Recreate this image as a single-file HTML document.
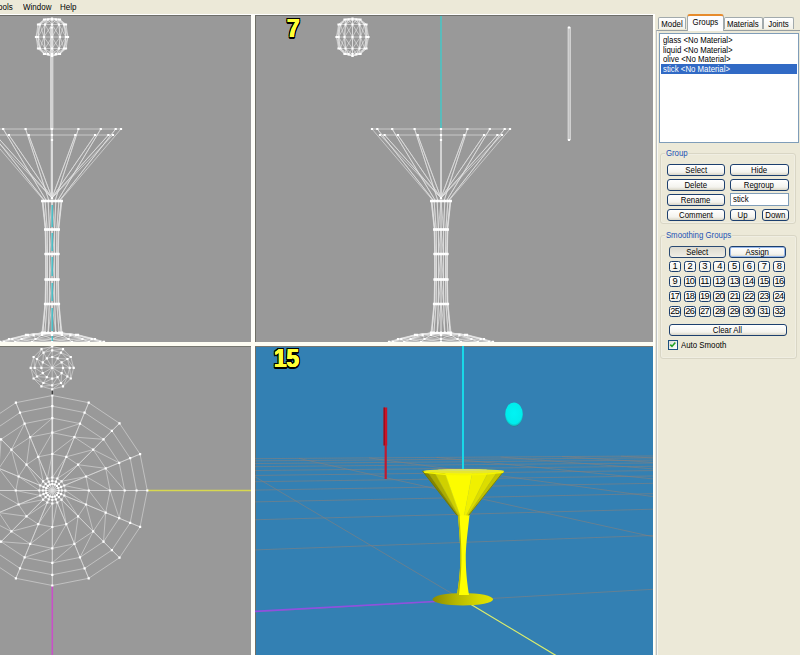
<!DOCTYPE html>
<html><head><meta charset="utf-8"><title>MilkShape 3D</title>
<style>
html,body{margin:0;padding:0}
body{width:800px;height:655px;overflow:hidden;background:#ece9d8;position:relative;font-family:"Liberation Sans",sans-serif;font-size:9px;color:#000}
.abs{position:absolute}
.menu span{position:absolute;top:1.6px;font-size:9.2px;line-height:11px;white-space:nowrap;transform:scaleX(.87);transform-origin:0 50%}
svg{position:absolute;left:0;top:0}
.tab{position:absolute;top:17px;height:12px;border:1px solid #a2aaac;border-bottom:none;border-radius:2px 2px 0 0;background:linear-gradient(#fff,#f3f2ea);box-sizing:border-box;text-align:center;font-size:8.8px;line-height:12px;white-space:nowrap}
.tab.sel{top:14px;height:17px;background:#fcfcfe;border-top:2px solid #e68b2c;line-height:13px;z-index:3;border-radius:3px 3px 0 0}
.btn{position:absolute;height:12px;box-sizing:border-box;border:1px solid #1c3f6e;border-radius:3px;background:linear-gradient(#fff,#f4f3ee 70%,#d9d6c8);text-align:center;font-size:8.8px;line-height:10.5px;white-space:nowrap;overflow:hidden}
.nb{position:absolute;width:12px;height:11px;box-sizing:border-box;border:1px solid #1c3f6e;border-radius:2.5px;background:linear-gradient(#fff,#f1f0e8);text-align:center;font-size:9.3px;line-height:9.5px;letter-spacing:-0.7px;overflow:hidden;white-space:nowrap}
.grp{position:absolute;border:1px solid #d9d6c5;box-shadow:inset 0 0 0 1px #f0eee2;border-radius:3px;box-sizing:border-box}
.lbl{transform:scaleX(.89);transform-origin:0 50%;position:absolute;color:#2251b4;font-size:8.8px;line-height:10px;background:#ece9d8;padding:0 1px;white-space:nowrap}
.t{display:inline-block;transform:scaleX(.89);transform-origin:50% 50%}
.tl{display:inline-block;transform:scaleX(.89);transform-origin:0 50%}
.fps{position:absolute;font:bold 25px/25px "Liberation Sans",sans-serif;color:#ffff36;transform-origin:0 0;transform:scaleX(.9);white-space:nowrap;text-shadow:.55px 0 #ffff36,-.55px 0 #ffff36,0 .4px #ffff36,0 -.4px #ffff36}
.fps span{display:inline-block}
.fps .a::before,.fps .a::after,.fps .b::before,.fps .b::after{position:absolute;z-index:-1;color:#000;left:0;top:0;text-shadow:.6px 0 #000,-.6px 0 #000,0 .5px #000,0 -.5px #000}
.f7 .a::before,.f7 .a::after,.f7 .b::before,.f7 .b::after{content:"7"}
.f15 .a::before,.f15 .a::after,.f15 .b::before,.f15 .b::after{content:"15"}
.fps .a::before{left:-1.2px;top:-1.1px}.fps .a::after{left:1.2px;top:-1.1px}.fps .b::before{left:-1.2px;top:1.1px}.fps .b::after{left:1.2px;top:1.1px}
.li{position:absolute;left:1px;right:1px;height:10px;font-size:8.8px;line-height:10px;padding-left:2px;white-space:nowrap}
</style></head><body>

<div class="menu"><span style="left:-1.6px">ools</span><span style="left:23px">Window</span><span style="left:60px">Help</span></div>
<div class="abs" style="left:0;top:14px;width:655px;height:1px;background:#fff"></div>
<div class="abs" style="left:0;top:15px;width:653px;height:1px;background:#6e6e6a"></div>
<div class="abs" style="left:0;top:16px;width:653px;height:639px;background:#999"></div>
<div class="abs" style="left:255px;top:346px;width:398px;height:309px;background:#3380b3"></div>
<div class="abs" style="left:251px;top:15px;width:3.6px;height:640px;background:#fffffa"></div>
<div class="abs" style="left:254.6px;top:16px;width:0.8px;height:639px;background:#6f6f66"></div>
<div class="abs" style="left:0;top:342px;width:653px;height:3.6px;background:#fdfcf2"></div>
<div class="abs" style="left:0;top:345.5px;width:251px;height:1px;background:#77776f"></div>
<div class="abs" style="left:255px;top:345.5px;width:398px;height:1px;background:#77776f"></div>
<div class="abs" style="left:653px;top:15px;width:2px;height:640px;background:#fffffa"></div>
<svg width="800" height="655" viewBox="0 0 800 655" shape-rendering="auto">
<defs><clipPath id="ctl"><rect x="0" y="16" width="251" height="326"/></clipPath><clipPath id="ctr"><rect x="255" y="16" width="398" height="326"/></clipPath><clipPath id="cbl"><rect x="0" y="346" width="251" height="309"/></clipPath><clipPath id="cbr"><rect x="255" y="346" width="398" height="309"/></clipPath>
<linearGradient id="cone" x1="0" x2="1"><stop offset="0" stop-color="#b4b400"/><stop offset="0.22" stop-color="#c8c800"/><stop offset="0.36" stop-color="#ecec00"/><stop offset="0.5" stop-color="#ffff00"/><stop offset="0.68" stop-color="#f4f400"/><stop offset="0.85" stop-color="#d8d800"/><stop offset="1" stop-color="#c0c000"/></linearGradient>
<linearGradient id="base" x1="0" x2="1"><stop offset="0" stop-color="#8c8c00"/><stop offset="0.4" stop-color="#b8b800"/><stop offset="0.75" stop-color="#d6d600"/><stop offset="1" stop-color="#e4e400"/></linearGradient>
<radialGradient id="ol" cx="0.5" cy="0.45" r="0.55"><stop offset="0" stop-color="#00f4f4"/><stop offset="0.8" stop-color="#00ecec"/><stop offset="0.93" stop-color="#10bcc4"/><stop offset="1" stop-color="#2a808a"/></radialGradient>
</defs>
<g clip-path="url(#ctl)">
<rect x="50" y="27" width="3.4" height="102" fill="#dcdcdc" fill-opacity="0.85"/><rect x="50.6" y="129" width="2" height="70" fill="#dcdcdc" fill-opacity="0.7"/>
<path d="M-17.0 129.0L121.0 129.0M-9.0 135.0L113.0 135.0M121.0 129.0L60.5 200.0M113.0 135.0L52.0 198.0M115.7 129.0L59.9 200.0M108.4 135.0L52.0 198.0M100.8 129.0L58.0 200.0M95.1 135.0L52.0 198.0M78.4 129.0L55.3 200.0M75.3 135.0L52.0 198.0M52.0 129.0L52.0 200.0M52.0 135.0L52.0 198.0M25.6 129.0L48.7 200.0M28.7 135.0L52.0 198.0M3.2 129.0L46.0 200.0M8.9 135.0L52.0 198.0M-11.7 129.0L44.1 200.0M-4.4 135.0L52.0 198.0M-17.0 129.0L43.5 200.0M-9.0 135.0L52.0 198.0M-11.7 129.0L44.1 200.0M-4.4 135.0L52.0 198.0M3.2 129.0L46.0 200.0M8.9 135.0L52.0 198.0M25.6 129.0L48.7 200.0M28.7 135.0L52.0 198.0M52.0 129.0L52.0 200.0M52.0 135.0L52.0 198.0M78.4 129.0L55.3 200.0M75.3 135.0L52.0 198.0M100.8 129.0L58.0 200.0M95.1 135.0L52.0 198.0M115.7 129.0L59.9 200.0M108.4 135.0L52.0 198.0M42.2 201.0L61.8 201.0M45.2 229.5L58.8 229.5M45.6 254.0L58.4 254.0M45.6 279.5L58.4 279.5M45.0 304.0L59.0 304.0M42.0 332.5L62.0 332.5M61.8 201.0L58.8 229.5M61.8 201.0L58.3 229.5M61.1 201.0L58.3 229.5M58.9 201.0L56.8 229.5M55.8 201.0L54.6 229.5M52.0 201.0L52.0 229.5M52.0 201.0L49.4 229.5M48.2 201.0L49.4 229.5M45.1 201.0L47.2 229.5M42.9 201.0L45.7 229.5M42.2 201.0L45.2 229.5M42.2 201.0L45.7 229.5M42.9 201.0L45.7 229.5M45.1 201.0L47.2 229.5M48.2 201.0L49.4 229.5M52.0 201.0L52.0 229.5M52.0 201.0L54.6 229.5M55.8 201.0L54.6 229.5M58.9 201.0L56.8 229.5M61.1 201.0L58.3 229.5M58.8 229.5L58.4 254.0M58.8 229.5L57.9 254.0M58.3 229.5L57.9 254.0M56.8 229.5L56.5 254.0M54.6 229.5L54.4 254.0M52.0 229.5L52.0 254.0M52.0 229.5L49.6 254.0M49.4 229.5L49.6 254.0M47.2 229.5L47.5 254.0M45.7 229.5L46.1 254.0M45.2 229.5L45.6 254.0M45.2 229.5L46.1 254.0M45.7 229.5L46.1 254.0M47.2 229.5L47.5 254.0M49.4 229.5L49.6 254.0M52.0 229.5L52.0 254.0M52.0 229.5L54.4 254.0M54.6 229.5L54.4 254.0M56.8 229.5L56.5 254.0M58.3 229.5L57.9 254.0M58.4 254.0L58.4 279.5M58.4 254.0L57.9 279.5M57.9 254.0L57.9 279.5M56.5 254.0L56.5 279.5M54.4 254.0L54.4 279.5M52.0 254.0L52.0 279.5M52.0 254.0L49.6 279.5M49.6 254.0L49.6 279.5M47.5 254.0L47.5 279.5M46.1 254.0L46.1 279.5M45.6 254.0L45.6 279.5M45.6 254.0L46.1 279.5M46.1 254.0L46.1 279.5M47.5 254.0L47.5 279.5M49.6 254.0L49.6 279.5M52.0 254.0L52.0 279.5M52.0 254.0L54.4 279.5M54.4 254.0L54.4 279.5M56.5 254.0L56.5 279.5M57.9 254.0L57.9 279.5M58.4 279.5L59.0 304.0M58.4 279.5L58.5 304.0M57.9 279.5L58.5 304.0M56.5 279.5L56.9 304.0M54.4 279.5L54.7 304.0M52.0 279.5L52.0 304.0M52.0 279.5L49.3 304.0M49.6 279.5L49.3 304.0M47.5 279.5L47.1 304.0M46.1 279.5L45.5 304.0M45.6 279.5L45.0 304.0M45.6 279.5L45.5 304.0M46.1 279.5L45.5 304.0M47.5 279.5L47.1 304.0M49.6 279.5L49.3 304.0M52.0 279.5L52.0 304.0M52.0 279.5L54.7 304.0M54.4 279.5L54.7 304.0M56.5 279.5L56.9 304.0M57.9 279.5L58.5 304.0M59.0 304.0L62.0 332.5M59.0 304.0L61.2 332.5M58.5 304.0L61.2 332.5M56.9 304.0L59.1 332.5M54.7 304.0L55.8 332.5M52.0 304.0L52.0 332.5M52.0 304.0L48.2 332.5M49.3 304.0L48.2 332.5M47.1 304.0L44.9 332.5M45.5 304.0L42.8 332.5M45.0 304.0L42.0 332.5M45.0 304.0L42.8 332.5M45.5 304.0L42.8 332.5M47.1 304.0L44.9 332.5M49.3 304.0L48.2 332.5M52.0 304.0L52.0 332.5M52.0 304.0L55.8 332.5M54.7 304.0L55.8 332.5M56.9 304.0L59.1 332.5M58.5 304.0L61.2 332.5M42.0 333.0L62.0 333.0M26.0 334.8L78.0 334.8M9.0 339.0L95.0 339.0M0.0 341.8L104.0 341.8M62.0 333.0L78.0 334.8M62.0 333.0L76.0 334.8M61.2 333.0L76.0 334.8M61.2 333.0L70.4 334.8M59.1 333.0L70.4 334.8M59.1 333.0L61.9 334.8M55.8 333.0L61.9 334.8M55.8 333.0L52.0 334.8M52.0 333.0L52.0 334.8M52.0 333.0L42.1 334.8M48.2 333.0L42.1 334.8M48.2 333.0L33.6 334.8M44.9 333.0L33.6 334.8M44.9 333.0L28.0 334.8M42.8 333.0L28.0 334.8M42.8 333.0L26.0 334.8M42.0 333.0L26.0 334.8M42.0 333.0L28.0 334.8M42.8 333.0L28.0 334.8M42.8 333.0L33.6 334.8M44.9 333.0L33.6 334.8M44.9 333.0L42.1 334.8M48.2 333.0L42.1 334.8M48.2 333.0L52.0 334.8M52.0 333.0L52.0 334.8M52.0 333.0L61.9 334.8M55.8 333.0L61.9 334.8M55.8 333.0L70.4 334.8M59.1 333.0L70.4 334.8M59.1 333.0L76.0 334.8M61.2 333.0L76.0 334.8M61.2 333.0L78.0 334.8M78.0 334.8L95.0 339.0M78.0 334.8L91.7 339.0M76.0 334.8L91.7 339.0M76.0 334.8L82.4 339.0M70.4 334.8L82.4 339.0M70.4 334.8L68.5 339.0M61.9 334.8L68.5 339.0M61.9 334.8L52.0 339.0M52.0 334.8L52.0 339.0M52.0 334.8L35.5 339.0M42.1 334.8L35.5 339.0M42.1 334.8L21.6 339.0M33.6 334.8L21.6 339.0M33.6 334.8L12.3 339.0M28.0 334.8L12.3 339.0M28.0 334.8L9.0 339.0M26.0 334.8L9.0 339.0M26.0 334.8L12.3 339.0M28.0 334.8L12.3 339.0M28.0 334.8L21.6 339.0M33.6 334.8L21.6 339.0M33.6 334.8L35.5 339.0M42.1 334.8L35.5 339.0M42.1 334.8L52.0 339.0M52.0 334.8L52.0 339.0M52.0 334.8L68.5 339.0M61.9 334.8L68.5 339.0M61.9 334.8L82.4 339.0M70.4 334.8L82.4 339.0M70.4 334.8L91.7 339.0M76.0 334.8L91.7 339.0M76.0 334.8L95.0 339.0M95.0 339.0L104.0 341.8M95.0 339.0L100.0 341.8M91.7 339.0L100.0 341.8M91.7 339.0L88.8 341.8M82.4 339.0L88.8 341.8M82.4 339.0L71.9 341.8M68.5 339.0L71.9 341.8M68.5 339.0L52.0 341.8M52.0 339.0L52.0 341.8M52.0 339.0L32.1 341.8M35.5 339.0L32.1 341.8M35.5 339.0L15.2 341.8M21.6 339.0L15.2 341.8M21.6 339.0L4.0 341.8M12.3 339.0L4.0 341.8M12.3 339.0L0.0 341.8M9.0 339.0L0.0 341.8M9.0 339.0L4.0 341.8M12.3 339.0L4.0 341.8M12.3 339.0L15.2 341.8M21.6 339.0L15.2 341.8M21.6 339.0L32.1 341.8M35.5 339.0L32.1 341.8M35.5 339.0L52.0 341.8M52.0 339.0L52.0 341.8M52.0 339.0L71.9 341.8M68.5 339.0L71.9 341.8M68.5 339.0L88.8 341.8M82.4 339.0L88.8 341.8M82.4 339.0L100.0 341.8M91.7 339.0L100.0 341.8M91.7 339.0L104.0 341.8M44.0 19.5L60.0 19.5M38.0 24.5L66.0 24.5M36.0 37.0L68.0 37.0M38.0 48.5L66.0 48.5M44.0 54.0L60.0 54.0M52.0 18.5L60.0 19.5M52.0 18.5L58.9 19.5M52.0 18.5L58.9 19.5M52.0 18.5L56.0 19.5M52.0 18.5L56.0 19.5M52.0 18.5L52.0 19.5M52.0 18.5L52.0 19.5M52.0 18.5L48.0 19.5M52.0 18.5L48.0 19.5M52.0 18.5L45.1 19.5M52.0 18.5L45.1 19.5M52.0 18.5L44.0 19.5M52.0 18.5L44.0 19.5M52.0 18.5L45.1 19.5M52.0 18.5L45.1 19.5M52.0 18.5L48.0 19.5M52.0 18.5L48.0 19.5M52.0 18.5L52.0 19.5M52.0 18.5L52.0 19.5M52.0 18.5L56.0 19.5M52.0 18.5L56.0 19.5M52.0 18.5L58.9 19.5M52.0 18.5L58.9 19.5M52.0 18.5L60.0 19.5M60.0 19.5L66.0 24.5M60.0 19.5L64.1 24.5M58.9 19.5L64.1 24.5M58.9 19.5L59.0 24.5M56.0 19.5L59.0 24.5M56.0 19.5L52.0 24.5M52.0 19.5L52.0 24.5M52.0 19.5L45.0 24.5M48.0 19.5L45.0 24.5M48.0 19.5L39.9 24.5M45.1 19.5L39.9 24.5M45.1 19.5L38.0 24.5M44.0 19.5L38.0 24.5M44.0 19.5L39.9 24.5M45.1 19.5L39.9 24.5M45.1 19.5L45.0 24.5M48.0 19.5L45.0 24.5M48.0 19.5L52.0 24.5M52.0 19.5L52.0 24.5M52.0 19.5L59.0 24.5M56.0 19.5L59.0 24.5M56.0 19.5L64.1 24.5M58.9 19.5L64.1 24.5M58.9 19.5L66.0 24.5M66.0 24.5L68.0 37.0M66.0 24.5L65.9 37.0M64.1 24.5L65.9 37.0M64.1 24.5L60.0 37.0M59.0 24.5L60.0 37.0M59.0 24.5L52.0 37.0M52.0 24.5L52.0 37.0M52.0 24.5L44.0 37.0M45.0 24.5L44.0 37.0M45.0 24.5L38.1 37.0M39.9 24.5L38.1 37.0M39.9 24.5L36.0 37.0M38.0 24.5L36.0 37.0M38.0 24.5L38.1 37.0M39.9 24.5L38.1 37.0M39.9 24.5L44.0 37.0M45.0 24.5L44.0 37.0M45.0 24.5L52.0 37.0M52.0 24.5L52.0 37.0M52.0 24.5L60.0 37.0M59.0 24.5L60.0 37.0M59.0 24.5L65.9 37.0M64.1 24.5L65.9 37.0M64.1 24.5L68.0 37.0M68.0 37.0L66.0 48.5M68.0 37.0L64.1 48.5M65.9 37.0L64.1 48.5M65.9 37.0L59.0 48.5M60.0 37.0L59.0 48.5M60.0 37.0L52.0 48.5M52.0 37.0L52.0 48.5M52.0 37.0L45.0 48.5M44.0 37.0L45.0 48.5M44.0 37.0L39.9 48.5M38.1 37.0L39.9 48.5M38.1 37.0L38.0 48.5M36.0 37.0L38.0 48.5M36.0 37.0L39.9 48.5M38.1 37.0L39.9 48.5M38.1 37.0L45.0 48.5M44.0 37.0L45.0 48.5M44.0 37.0L52.0 48.5M52.0 37.0L52.0 48.5M52.0 37.0L59.0 48.5M60.0 37.0L59.0 48.5M60.0 37.0L64.1 48.5M65.9 37.0L64.1 48.5M65.9 37.0L66.0 48.5M66.0 48.5L60.0 54.0M66.0 48.5L58.9 54.0M64.1 48.5L58.9 54.0M64.1 48.5L56.0 54.0M59.0 48.5L56.0 54.0M59.0 48.5L52.0 54.0M52.0 48.5L52.0 54.0M52.0 48.5L48.0 54.0M45.0 48.5L48.0 54.0M45.0 48.5L45.1 54.0M39.9 48.5L45.1 54.0M39.9 48.5L44.0 54.0M38.0 48.5L44.0 54.0M38.0 48.5L45.1 54.0M39.9 48.5L45.1 54.0M39.9 48.5L48.0 54.0M45.0 48.5L48.0 54.0M45.0 48.5L52.0 54.0M52.0 48.5L52.0 54.0M52.0 48.5L56.0 54.0M59.0 48.5L56.0 54.0M59.0 48.5L58.9 54.0M64.1 48.5L58.9 54.0M64.1 48.5L60.0 54.0M60.0 54.0L52.0 56.0M60.0 54.0L52.0 56.0M58.9 54.0L52.0 56.0M58.9 54.0L52.0 56.0M56.0 54.0L52.0 56.0M56.0 54.0L52.0 56.0M52.0 54.0L52.0 56.0M52.0 54.0L52.0 56.0M48.0 54.0L52.0 56.0M48.0 54.0L52.0 56.0M45.1 54.0L52.0 56.0M45.1 54.0L52.0 56.0M44.0 54.0L52.0 56.0M44.0 54.0L52.0 56.0M45.1 54.0L52.0 56.0M45.1 54.0L52.0 56.0M48.0 54.0L52.0 56.0M48.0 54.0L52.0 56.0M52.0 54.0L52.0 56.0M52.0 54.0L52.0 56.0M56.0 54.0L52.0 56.0M56.0 54.0L52.0 56.0M58.9 54.0L52.0 56.0M58.9 54.0L52.0 56.0" stroke="#e4e4e4" stroke-opacity="0.80" stroke-width="0.80" fill="none"/><path d="M119.9 127.9h2.2v2.2h-2.2zM114.6 127.9h2.2v2.2h-2.2zM99.7 127.9h2.2v2.2h-2.2zM77.3 127.9h2.2v2.2h-2.2zM50.9 127.9h2.2v2.2h-2.2zM24.5 127.9h2.2v2.2h-2.2zM2.1 127.9h2.2v2.2h-2.2zM-12.8 127.9h2.2v2.2h-2.2zM-18.1 127.9h2.2v2.2h-2.2zM-12.8 127.9h2.2v2.2h-2.2zM2.1 127.9h2.2v2.2h-2.2zM24.5 127.9h2.2v2.2h-2.2zM50.9 127.9h2.2v2.2h-2.2zM77.3 127.9h2.2v2.2h-2.2zM99.7 127.9h2.2v2.2h-2.2zM114.6 127.9h2.2v2.2h-2.2zM111.9 133.9h2.2v2.2h-2.2zM107.3 133.9h2.2v2.2h-2.2zM94.0 133.9h2.2v2.2h-2.2zM74.2 133.9h2.2v2.2h-2.2zM50.9 133.9h2.2v2.2h-2.2zM27.6 133.9h2.2v2.2h-2.2zM7.8 133.9h2.2v2.2h-2.2zM-5.5 133.9h2.2v2.2h-2.2zM-10.1 133.9h2.2v2.2h-2.2zM-5.5 133.9h2.2v2.2h-2.2zM7.8 133.9h2.2v2.2h-2.2zM27.6 133.9h2.2v2.2h-2.2zM50.9 133.9h2.2v2.2h-2.2zM74.2 133.9h2.2v2.2h-2.2zM94.0 133.9h2.2v2.2h-2.2zM107.3 133.9h2.2v2.2h-2.2zM50.9 138.9h2.2v2.2h-2.2zM50.9 196.9h2.2v2.2h-2.2zM60.7 199.9h2.2v2.2h-2.2zM60.0 199.9h2.2v2.2h-2.2zM57.8 199.9h2.2v2.2h-2.2zM54.7 199.9h2.2v2.2h-2.2zM50.9 199.9h2.2v2.2h-2.2zM47.1 199.9h2.2v2.2h-2.2zM44.0 199.9h2.2v2.2h-2.2zM41.8 199.9h2.2v2.2h-2.2zM41.1 199.9h2.2v2.2h-2.2zM41.8 199.9h2.2v2.2h-2.2zM44.0 199.9h2.2v2.2h-2.2zM47.1 199.9h2.2v2.2h-2.2zM50.9 199.9h2.2v2.2h-2.2zM54.7 199.9h2.2v2.2h-2.2zM57.8 199.9h2.2v2.2h-2.2zM60.0 199.9h2.2v2.2h-2.2zM57.7 228.4h2.2v2.2h-2.2zM57.2 228.4h2.2v2.2h-2.2zM55.7 228.4h2.2v2.2h-2.2zM53.5 228.4h2.2v2.2h-2.2zM50.9 228.4h2.2v2.2h-2.2zM48.3 228.4h2.2v2.2h-2.2zM46.1 228.4h2.2v2.2h-2.2zM44.6 228.4h2.2v2.2h-2.2zM44.1 228.4h2.2v2.2h-2.2zM44.6 228.4h2.2v2.2h-2.2zM46.1 228.4h2.2v2.2h-2.2zM48.3 228.4h2.2v2.2h-2.2zM50.9 228.4h2.2v2.2h-2.2zM53.5 228.4h2.2v2.2h-2.2zM55.7 228.4h2.2v2.2h-2.2zM57.2 228.4h2.2v2.2h-2.2zM57.3 252.9h2.2v2.2h-2.2zM56.8 252.9h2.2v2.2h-2.2zM55.4 252.9h2.2v2.2h-2.2zM53.3 252.9h2.2v2.2h-2.2zM50.9 252.9h2.2v2.2h-2.2zM48.5 252.9h2.2v2.2h-2.2zM46.4 252.9h2.2v2.2h-2.2zM45.0 252.9h2.2v2.2h-2.2zM44.5 252.9h2.2v2.2h-2.2zM45.0 252.9h2.2v2.2h-2.2zM46.4 252.9h2.2v2.2h-2.2zM48.5 252.9h2.2v2.2h-2.2zM50.9 252.9h2.2v2.2h-2.2zM53.3 252.9h2.2v2.2h-2.2zM55.4 252.9h2.2v2.2h-2.2zM56.8 252.9h2.2v2.2h-2.2zM57.3 278.4h2.2v2.2h-2.2zM56.8 278.4h2.2v2.2h-2.2zM55.4 278.4h2.2v2.2h-2.2zM53.3 278.4h2.2v2.2h-2.2zM50.9 278.4h2.2v2.2h-2.2zM48.5 278.4h2.2v2.2h-2.2zM46.4 278.4h2.2v2.2h-2.2zM45.0 278.4h2.2v2.2h-2.2zM44.5 278.4h2.2v2.2h-2.2zM45.0 278.4h2.2v2.2h-2.2zM46.4 278.4h2.2v2.2h-2.2zM48.5 278.4h2.2v2.2h-2.2zM50.9 278.4h2.2v2.2h-2.2zM53.3 278.4h2.2v2.2h-2.2zM55.4 278.4h2.2v2.2h-2.2zM56.8 278.4h2.2v2.2h-2.2zM57.9 302.9h2.2v2.2h-2.2zM57.4 302.9h2.2v2.2h-2.2zM55.8 302.9h2.2v2.2h-2.2zM53.6 302.9h2.2v2.2h-2.2zM50.9 302.9h2.2v2.2h-2.2zM48.2 302.9h2.2v2.2h-2.2zM46.0 302.9h2.2v2.2h-2.2zM44.4 302.9h2.2v2.2h-2.2zM43.9 302.9h2.2v2.2h-2.2zM44.4 302.9h2.2v2.2h-2.2zM46.0 302.9h2.2v2.2h-2.2zM48.2 302.9h2.2v2.2h-2.2zM50.9 302.9h2.2v2.2h-2.2zM53.6 302.9h2.2v2.2h-2.2zM55.8 302.9h2.2v2.2h-2.2zM57.4 302.9h2.2v2.2h-2.2zM60.9 331.4h2.2v2.2h-2.2zM60.1 331.4h2.2v2.2h-2.2zM58.0 331.4h2.2v2.2h-2.2zM54.7 331.4h2.2v2.2h-2.2zM50.9 331.4h2.2v2.2h-2.2zM47.1 331.4h2.2v2.2h-2.2zM43.8 331.4h2.2v2.2h-2.2zM41.7 331.4h2.2v2.2h-2.2zM40.9 331.4h2.2v2.2h-2.2zM41.7 331.4h2.2v2.2h-2.2zM43.8 331.4h2.2v2.2h-2.2zM47.1 331.4h2.2v2.2h-2.2zM50.9 331.4h2.2v2.2h-2.2zM54.7 331.4h2.2v2.2h-2.2zM58.0 331.4h2.2v2.2h-2.2zM60.1 331.4h2.2v2.2h-2.2zM76.9 333.7h2.2v2.2h-2.2zM74.9 333.7h2.2v2.2h-2.2zM69.3 333.7h2.2v2.2h-2.2zM60.8 333.7h2.2v2.2h-2.2zM50.9 333.7h2.2v2.2h-2.2zM41.0 333.7h2.2v2.2h-2.2zM32.5 333.7h2.2v2.2h-2.2zM26.9 333.7h2.2v2.2h-2.2zM24.9 333.7h2.2v2.2h-2.2zM26.9 333.7h2.2v2.2h-2.2zM32.5 333.7h2.2v2.2h-2.2zM41.0 333.7h2.2v2.2h-2.2zM50.9 333.7h2.2v2.2h-2.2zM60.8 333.7h2.2v2.2h-2.2zM69.3 333.7h2.2v2.2h-2.2zM74.9 333.7h2.2v2.2h-2.2zM93.9 337.9h2.2v2.2h-2.2zM90.6 337.9h2.2v2.2h-2.2zM81.3 337.9h2.2v2.2h-2.2zM67.4 337.9h2.2v2.2h-2.2zM50.9 337.9h2.2v2.2h-2.2zM34.4 337.9h2.2v2.2h-2.2zM20.5 337.9h2.2v2.2h-2.2zM11.2 337.9h2.2v2.2h-2.2zM7.9 337.9h2.2v2.2h-2.2zM11.2 337.9h2.2v2.2h-2.2zM20.5 337.9h2.2v2.2h-2.2zM34.4 337.9h2.2v2.2h-2.2zM50.9 337.9h2.2v2.2h-2.2zM67.4 337.9h2.2v2.2h-2.2zM81.3 337.9h2.2v2.2h-2.2zM90.6 337.9h2.2v2.2h-2.2zM102.9 340.7h2.2v2.2h-2.2zM98.9 340.7h2.2v2.2h-2.2zM87.7 340.7h2.2v2.2h-2.2zM70.8 340.7h2.2v2.2h-2.2zM50.9 340.7h2.2v2.2h-2.2zM31.0 340.7h2.2v2.2h-2.2zM14.1 340.7h2.2v2.2h-2.2zM2.9 340.7h2.2v2.2h-2.2zM-1.1 340.7h2.2v2.2h-2.2zM2.9 340.7h2.2v2.2h-2.2zM14.1 340.7h2.2v2.2h-2.2zM31.0 340.7h2.2v2.2h-2.2zM50.9 340.7h2.2v2.2h-2.2zM70.8 340.7h2.2v2.2h-2.2zM87.7 340.7h2.2v2.2h-2.2zM98.9 340.7h2.2v2.2h-2.2zM50.9 17.4h2.2v2.2h-2.2zM50.9 17.4h2.2v2.2h-2.2zM50.9 17.4h2.2v2.2h-2.2zM50.9 17.4h2.2v2.2h-2.2zM50.9 17.4h2.2v2.2h-2.2zM50.9 17.4h2.2v2.2h-2.2zM50.9 17.4h2.2v2.2h-2.2zM50.9 17.4h2.2v2.2h-2.2zM50.9 17.4h2.2v2.2h-2.2zM50.9 17.4h2.2v2.2h-2.2zM50.9 17.4h2.2v2.2h-2.2zM50.9 17.4h2.2v2.2h-2.2zM58.9 18.4h2.2v2.2h-2.2zM57.8 18.4h2.2v2.2h-2.2zM54.9 18.4h2.2v2.2h-2.2zM50.9 18.4h2.2v2.2h-2.2zM46.9 18.4h2.2v2.2h-2.2zM44.0 18.4h2.2v2.2h-2.2zM42.9 18.4h2.2v2.2h-2.2zM44.0 18.4h2.2v2.2h-2.2zM46.9 18.4h2.2v2.2h-2.2zM50.9 18.4h2.2v2.2h-2.2zM54.9 18.4h2.2v2.2h-2.2zM57.8 18.4h2.2v2.2h-2.2zM64.9 23.4h2.2v2.2h-2.2zM63.0 23.4h2.2v2.2h-2.2zM57.9 23.4h2.2v2.2h-2.2zM50.9 23.4h2.2v2.2h-2.2zM43.9 23.4h2.2v2.2h-2.2zM38.8 23.4h2.2v2.2h-2.2zM36.9 23.4h2.2v2.2h-2.2zM38.8 23.4h2.2v2.2h-2.2zM43.9 23.4h2.2v2.2h-2.2zM50.9 23.4h2.2v2.2h-2.2zM57.9 23.4h2.2v2.2h-2.2zM63.0 23.4h2.2v2.2h-2.2zM66.9 35.9h2.2v2.2h-2.2zM64.8 35.9h2.2v2.2h-2.2zM58.9 35.9h2.2v2.2h-2.2zM50.9 35.9h2.2v2.2h-2.2zM42.9 35.9h2.2v2.2h-2.2zM37.0 35.9h2.2v2.2h-2.2zM34.9 35.9h2.2v2.2h-2.2zM37.0 35.9h2.2v2.2h-2.2zM42.9 35.9h2.2v2.2h-2.2zM50.9 35.9h2.2v2.2h-2.2zM58.9 35.9h2.2v2.2h-2.2zM64.8 35.9h2.2v2.2h-2.2zM64.9 47.4h2.2v2.2h-2.2zM63.0 47.4h2.2v2.2h-2.2zM57.9 47.4h2.2v2.2h-2.2zM50.9 47.4h2.2v2.2h-2.2zM43.9 47.4h2.2v2.2h-2.2zM38.8 47.4h2.2v2.2h-2.2zM36.9 47.4h2.2v2.2h-2.2zM38.8 47.4h2.2v2.2h-2.2zM43.9 47.4h2.2v2.2h-2.2zM50.9 47.4h2.2v2.2h-2.2zM57.9 47.4h2.2v2.2h-2.2zM63.0 47.4h2.2v2.2h-2.2zM58.9 52.9h2.2v2.2h-2.2zM57.8 52.9h2.2v2.2h-2.2zM54.9 52.9h2.2v2.2h-2.2zM50.9 52.9h2.2v2.2h-2.2zM46.9 52.9h2.2v2.2h-2.2zM44.0 52.9h2.2v2.2h-2.2zM42.9 52.9h2.2v2.2h-2.2zM44.0 52.9h2.2v2.2h-2.2zM46.9 52.9h2.2v2.2h-2.2zM50.9 52.9h2.2v2.2h-2.2zM54.9 52.9h2.2v2.2h-2.2zM57.8 52.9h2.2v2.2h-2.2zM50.9 54.9h2.2v2.2h-2.2zM50.9 54.9h2.2v2.2h-2.2zM50.9 54.9h2.2v2.2h-2.2zM50.9 54.9h2.2v2.2h-2.2zM50.9 54.9h2.2v2.2h-2.2zM50.9 54.9h2.2v2.2h-2.2zM50.9 54.9h2.2v2.2h-2.2zM50.9 54.9h2.2v2.2h-2.2zM50.9 54.9h2.2v2.2h-2.2zM50.9 54.9h2.2v2.2h-2.2zM50.9 54.9h2.2v2.2h-2.2zM50.9 54.9h2.2v2.2h-2.2zM50.6 26.4h2.2v2.2h-2.2zM50.6 127.9h2.2v2.2h-2.2z" fill="#fff"/><rect x="41.2" y="199.7" width="21.6" height="2.6" fill="#fff" fill-opacity="0.92"/><rect x="44.2" y="228.2" width="15.6" height="2.6" fill="#fff" fill-opacity="0.92"/><rect x="44.6" y="252.7" width="14.8" height="2.6" fill="#fff" fill-opacity="0.92"/><rect x="44.6" y="278.2" width="14.8" height="2.6" fill="#fff" fill-opacity="0.92"/><rect x="44.0" y="302.7" width="16.0" height="2.6" fill="#fff" fill-opacity="0.92"/><rect x="41.5" y="332.0" width="21.0" height="2.2" fill="#fff" fill-opacity="0.92"/>
<path d="M52.2 205V227M52.2 233V251M52.2 257V276M52.2 283V301M52.2 308V331M52.2 336V341" stroke="#35bcc6" stroke-width="1.5" stroke-opacity="0.9"/>
</g>
<g clip-path="url(#ctr)">
<path d="M441 16V129" stroke="#2fd3d3" stroke-width="1.2"/>
<rect x="567.9" y="27" width="2.6" height="113" fill="#e6e6e6" fill-opacity="0.45"/><path d="M568.1 27V140M570.3 27V140" stroke="#f0f0f0" stroke-width="0.8" stroke-opacity="0.85"/>
<path d="M372.0 129.0L510.0 129.0M380.0 135.0L502.0 135.0M510.0 129.0L449.5 200.0M502.0 135.0L441.0 198.0M504.7 129.0L448.9 200.0M497.4 135.0L441.0 198.0M489.8 129.0L447.0 200.0M484.1 135.0L441.0 198.0M467.4 129.0L444.3 200.0M464.3 135.0L441.0 198.0M441.0 129.0L441.0 200.0M441.0 135.0L441.0 198.0M414.6 129.0L437.7 200.0M417.7 135.0L441.0 198.0M392.2 129.0L435.0 200.0M397.9 135.0L441.0 198.0M377.3 129.0L433.1 200.0M384.6 135.0L441.0 198.0M372.0 129.0L432.5 200.0M380.0 135.0L441.0 198.0M377.3 129.0L433.1 200.0M384.6 135.0L441.0 198.0M392.2 129.0L435.0 200.0M397.9 135.0L441.0 198.0M414.6 129.0L437.7 200.0M417.7 135.0L441.0 198.0M441.0 129.0L441.0 200.0M441.0 135.0L441.0 198.0M467.4 129.0L444.3 200.0M464.3 135.0L441.0 198.0M489.8 129.0L447.0 200.0M484.1 135.0L441.0 198.0M504.7 129.0L448.9 200.0M497.4 135.0L441.0 198.0M431.2 201.0L450.8 201.0M434.2 229.5L447.8 229.5M434.6 254.0L447.4 254.0M434.6 279.5L447.4 279.5M434.0 304.0L448.0 304.0M431.0 332.5L451.0 332.5M450.8 201.0L447.8 229.5M450.8 201.0L447.3 229.5M450.1 201.0L447.3 229.5M447.9 201.0L445.8 229.5M444.8 201.0L443.6 229.5M441.0 201.0L441.0 229.5M441.0 201.0L438.4 229.5M437.2 201.0L438.4 229.5M434.1 201.0L436.2 229.5M431.9 201.0L434.7 229.5M431.2 201.0L434.2 229.5M431.2 201.0L434.7 229.5M431.9 201.0L434.7 229.5M434.1 201.0L436.2 229.5M437.2 201.0L438.4 229.5M441.0 201.0L441.0 229.5M441.0 201.0L443.6 229.5M444.8 201.0L443.6 229.5M447.9 201.0L445.8 229.5M450.1 201.0L447.3 229.5M447.8 229.5L447.4 254.0M447.8 229.5L446.9 254.0M447.3 229.5L446.9 254.0M445.8 229.5L445.5 254.0M443.6 229.5L443.4 254.0M441.0 229.5L441.0 254.0M441.0 229.5L438.6 254.0M438.4 229.5L438.6 254.0M436.2 229.5L436.5 254.0M434.7 229.5L435.1 254.0M434.2 229.5L434.6 254.0M434.2 229.5L435.1 254.0M434.7 229.5L435.1 254.0M436.2 229.5L436.5 254.0M438.4 229.5L438.6 254.0M441.0 229.5L441.0 254.0M441.0 229.5L443.4 254.0M443.6 229.5L443.4 254.0M445.8 229.5L445.5 254.0M447.3 229.5L446.9 254.0M447.4 254.0L447.4 279.5M447.4 254.0L446.9 279.5M446.9 254.0L446.9 279.5M445.5 254.0L445.5 279.5M443.4 254.0L443.4 279.5M441.0 254.0L441.0 279.5M441.0 254.0L438.6 279.5M438.6 254.0L438.6 279.5M436.5 254.0L436.5 279.5M435.1 254.0L435.1 279.5M434.6 254.0L434.6 279.5M434.6 254.0L435.1 279.5M435.1 254.0L435.1 279.5M436.5 254.0L436.5 279.5M438.6 254.0L438.6 279.5M441.0 254.0L441.0 279.5M441.0 254.0L443.4 279.5M443.4 254.0L443.4 279.5M445.5 254.0L445.5 279.5M446.9 254.0L446.9 279.5M447.4 279.5L448.0 304.0M447.4 279.5L447.5 304.0M446.9 279.5L447.5 304.0M445.5 279.5L445.9 304.0M443.4 279.5L443.7 304.0M441.0 279.5L441.0 304.0M441.0 279.5L438.3 304.0M438.6 279.5L438.3 304.0M436.5 279.5L436.1 304.0M435.1 279.5L434.5 304.0M434.6 279.5L434.0 304.0M434.6 279.5L434.5 304.0M435.1 279.5L434.5 304.0M436.5 279.5L436.1 304.0M438.6 279.5L438.3 304.0M441.0 279.5L441.0 304.0M441.0 279.5L443.7 304.0M443.4 279.5L443.7 304.0M445.5 279.5L445.9 304.0M446.9 279.5L447.5 304.0M448.0 304.0L451.0 332.5M448.0 304.0L450.2 332.5M447.5 304.0L450.2 332.5M445.9 304.0L448.1 332.5M443.7 304.0L444.8 332.5M441.0 304.0L441.0 332.5M441.0 304.0L437.2 332.5M438.3 304.0L437.2 332.5M436.1 304.0L433.9 332.5M434.5 304.0L431.8 332.5M434.0 304.0L431.0 332.5M434.0 304.0L431.8 332.5M434.5 304.0L431.8 332.5M436.1 304.0L433.9 332.5M438.3 304.0L437.2 332.5M441.0 304.0L441.0 332.5M441.0 304.0L444.8 332.5M443.7 304.0L444.8 332.5M445.9 304.0L448.1 332.5M447.5 304.0L450.2 332.5M431.0 333.0L451.0 333.0M415.0 334.8L467.0 334.8M398.0 339.0L484.0 339.0M389.0 341.8L493.0 341.8M451.0 333.0L467.0 334.8M451.0 333.0L465.0 334.8M450.2 333.0L465.0 334.8M450.2 333.0L459.4 334.8M448.1 333.0L459.4 334.8M448.1 333.0L450.9 334.8M444.8 333.0L450.9 334.8M444.8 333.0L441.0 334.8M441.0 333.0L441.0 334.8M441.0 333.0L431.1 334.8M437.2 333.0L431.1 334.8M437.2 333.0L422.6 334.8M433.9 333.0L422.6 334.8M433.9 333.0L417.0 334.8M431.8 333.0L417.0 334.8M431.8 333.0L415.0 334.8M431.0 333.0L415.0 334.8M431.0 333.0L417.0 334.8M431.8 333.0L417.0 334.8M431.8 333.0L422.6 334.8M433.9 333.0L422.6 334.8M433.9 333.0L431.1 334.8M437.2 333.0L431.1 334.8M437.2 333.0L441.0 334.8M441.0 333.0L441.0 334.8M441.0 333.0L450.9 334.8M444.8 333.0L450.9 334.8M444.8 333.0L459.4 334.8M448.1 333.0L459.4 334.8M448.1 333.0L465.0 334.8M450.2 333.0L465.0 334.8M450.2 333.0L467.0 334.8M467.0 334.8L484.0 339.0M467.0 334.8L480.7 339.0M465.0 334.8L480.7 339.0M465.0 334.8L471.4 339.0M459.4 334.8L471.4 339.0M459.4 334.8L457.5 339.0M450.9 334.8L457.5 339.0M450.9 334.8L441.0 339.0M441.0 334.8L441.0 339.0M441.0 334.8L424.5 339.0M431.1 334.8L424.5 339.0M431.1 334.8L410.6 339.0M422.6 334.8L410.6 339.0M422.6 334.8L401.3 339.0M417.0 334.8L401.3 339.0M417.0 334.8L398.0 339.0M415.0 334.8L398.0 339.0M415.0 334.8L401.3 339.0M417.0 334.8L401.3 339.0M417.0 334.8L410.6 339.0M422.6 334.8L410.6 339.0M422.6 334.8L424.5 339.0M431.1 334.8L424.5 339.0M431.1 334.8L441.0 339.0M441.0 334.8L441.0 339.0M441.0 334.8L457.5 339.0M450.9 334.8L457.5 339.0M450.9 334.8L471.4 339.0M459.4 334.8L471.4 339.0M459.4 334.8L480.7 339.0M465.0 334.8L480.7 339.0M465.0 334.8L484.0 339.0M484.0 339.0L493.0 341.8M484.0 339.0L489.0 341.8M480.7 339.0L489.0 341.8M480.7 339.0L477.8 341.8M471.4 339.0L477.8 341.8M471.4 339.0L460.9 341.8M457.5 339.0L460.9 341.8M457.5 339.0L441.0 341.8M441.0 339.0L441.0 341.8M441.0 339.0L421.1 341.8M424.5 339.0L421.1 341.8M424.5 339.0L404.2 341.8M410.6 339.0L404.2 341.8M410.6 339.0L393.0 341.8M401.3 339.0L393.0 341.8M401.3 339.0L389.0 341.8M398.0 339.0L389.0 341.8M398.0 339.0L393.0 341.8M401.3 339.0L393.0 341.8M401.3 339.0L404.2 341.8M410.6 339.0L404.2 341.8M410.6 339.0L421.1 341.8M424.5 339.0L421.1 341.8M424.5 339.0L441.0 341.8M441.0 339.0L441.0 341.8M441.0 339.0L460.9 341.8M457.5 339.0L460.9 341.8M457.5 339.0L477.8 341.8M471.4 339.0L477.8 341.8M471.4 339.0L489.0 341.8M480.7 339.0L489.0 341.8M480.7 339.0L493.0 341.8M344.5 19.5L360.5 19.5M338.5 24.5L366.5 24.5M336.5 37.0L368.5 37.0M338.5 48.5L366.5 48.5M344.5 54.0L360.5 54.0M352.5 18.5L360.5 19.5M352.5 18.5L359.4 19.5M352.5 18.5L359.4 19.5M352.5 18.5L356.5 19.5M352.5 18.5L356.5 19.5M352.5 18.5L352.5 19.5M352.5 18.5L352.5 19.5M352.5 18.5L348.5 19.5M352.5 18.5L348.5 19.5M352.5 18.5L345.6 19.5M352.5 18.5L345.6 19.5M352.5 18.5L344.5 19.5M352.5 18.5L344.5 19.5M352.5 18.5L345.6 19.5M352.5 18.5L345.6 19.5M352.5 18.5L348.5 19.5M352.5 18.5L348.5 19.5M352.5 18.5L352.5 19.5M352.5 18.5L352.5 19.5M352.5 18.5L356.5 19.5M352.5 18.5L356.5 19.5M352.5 18.5L359.4 19.5M352.5 18.5L359.4 19.5M352.5 18.5L360.5 19.5M360.5 19.5L366.5 24.5M360.5 19.5L364.6 24.5M359.4 19.5L364.6 24.5M359.4 19.5L359.5 24.5M356.5 19.5L359.5 24.5M356.5 19.5L352.5 24.5M352.5 19.5L352.5 24.5M352.5 19.5L345.5 24.5M348.5 19.5L345.5 24.5M348.5 19.5L340.4 24.5M345.6 19.5L340.4 24.5M345.6 19.5L338.5 24.5M344.5 19.5L338.5 24.5M344.5 19.5L340.4 24.5M345.6 19.5L340.4 24.5M345.6 19.5L345.5 24.5M348.5 19.5L345.5 24.5M348.5 19.5L352.5 24.5M352.5 19.5L352.5 24.5M352.5 19.5L359.5 24.5M356.5 19.5L359.5 24.5M356.5 19.5L364.6 24.5M359.4 19.5L364.6 24.5M359.4 19.5L366.5 24.5M366.5 24.5L368.5 37.0M366.5 24.5L366.4 37.0M364.6 24.5L366.4 37.0M364.6 24.5L360.5 37.0M359.5 24.5L360.5 37.0M359.5 24.5L352.5 37.0M352.5 24.5L352.5 37.0M352.5 24.5L344.5 37.0M345.5 24.5L344.5 37.0M345.5 24.5L338.6 37.0M340.4 24.5L338.6 37.0M340.4 24.5L336.5 37.0M338.5 24.5L336.5 37.0M338.5 24.5L338.6 37.0M340.4 24.5L338.6 37.0M340.4 24.5L344.5 37.0M345.5 24.5L344.5 37.0M345.5 24.5L352.5 37.0M352.5 24.5L352.5 37.0M352.5 24.5L360.5 37.0M359.5 24.5L360.5 37.0M359.5 24.5L366.4 37.0M364.6 24.5L366.4 37.0M364.6 24.5L368.5 37.0M368.5 37.0L366.5 48.5M368.5 37.0L364.6 48.5M366.4 37.0L364.6 48.5M366.4 37.0L359.5 48.5M360.5 37.0L359.5 48.5M360.5 37.0L352.5 48.5M352.5 37.0L352.5 48.5M352.5 37.0L345.5 48.5M344.5 37.0L345.5 48.5M344.5 37.0L340.4 48.5M338.6 37.0L340.4 48.5M338.6 37.0L338.5 48.5M336.5 37.0L338.5 48.5M336.5 37.0L340.4 48.5M338.6 37.0L340.4 48.5M338.6 37.0L345.5 48.5M344.5 37.0L345.5 48.5M344.5 37.0L352.5 48.5M352.5 37.0L352.5 48.5M352.5 37.0L359.5 48.5M360.5 37.0L359.5 48.5M360.5 37.0L364.6 48.5M366.4 37.0L364.6 48.5M366.4 37.0L366.5 48.5M366.5 48.5L360.5 54.0M366.5 48.5L359.4 54.0M364.6 48.5L359.4 54.0M364.6 48.5L356.5 54.0M359.5 48.5L356.5 54.0M359.5 48.5L352.5 54.0M352.5 48.5L352.5 54.0M352.5 48.5L348.5 54.0M345.5 48.5L348.5 54.0M345.5 48.5L345.6 54.0M340.4 48.5L345.6 54.0M340.4 48.5L344.5 54.0M338.5 48.5L344.5 54.0M338.5 48.5L345.6 54.0M340.4 48.5L345.6 54.0M340.4 48.5L348.5 54.0M345.5 48.5L348.5 54.0M345.5 48.5L352.5 54.0M352.5 48.5L352.5 54.0M352.5 48.5L356.5 54.0M359.5 48.5L356.5 54.0M359.5 48.5L359.4 54.0M364.6 48.5L359.4 54.0M364.6 48.5L360.5 54.0M360.5 54.0L352.5 56.0M360.5 54.0L352.5 56.0M359.4 54.0L352.5 56.0M359.4 54.0L352.5 56.0M356.5 54.0L352.5 56.0M356.5 54.0L352.5 56.0M352.5 54.0L352.5 56.0M352.5 54.0L352.5 56.0M348.5 54.0L352.5 56.0M348.5 54.0L352.5 56.0M345.6 54.0L352.5 56.0M345.6 54.0L352.5 56.0M344.5 54.0L352.5 56.0M344.5 54.0L352.5 56.0M345.6 54.0L352.5 56.0M345.6 54.0L352.5 56.0M348.5 54.0L352.5 56.0M348.5 54.0L352.5 56.0M352.5 54.0L352.5 56.0M352.5 54.0L352.5 56.0M356.5 54.0L352.5 56.0M356.5 54.0L352.5 56.0M359.4 54.0L352.5 56.0M359.4 54.0L352.5 56.0" stroke="#e4e4e4" stroke-opacity="0.80" stroke-width="0.80" fill="none"/><path d="M508.9 127.9h2.2v2.2h-2.2zM503.6 127.9h2.2v2.2h-2.2zM488.7 127.9h2.2v2.2h-2.2zM466.3 127.9h2.2v2.2h-2.2zM439.9 127.9h2.2v2.2h-2.2zM413.5 127.9h2.2v2.2h-2.2zM391.1 127.9h2.2v2.2h-2.2zM376.2 127.9h2.2v2.2h-2.2zM370.9 127.9h2.2v2.2h-2.2zM376.2 127.9h2.2v2.2h-2.2zM391.1 127.9h2.2v2.2h-2.2zM413.5 127.9h2.2v2.2h-2.2zM439.9 127.9h2.2v2.2h-2.2zM466.3 127.9h2.2v2.2h-2.2zM488.7 127.9h2.2v2.2h-2.2zM503.6 127.9h2.2v2.2h-2.2zM500.9 133.9h2.2v2.2h-2.2zM496.3 133.9h2.2v2.2h-2.2zM483.0 133.9h2.2v2.2h-2.2zM463.2 133.9h2.2v2.2h-2.2zM439.9 133.9h2.2v2.2h-2.2zM416.6 133.9h2.2v2.2h-2.2zM396.8 133.9h2.2v2.2h-2.2zM383.5 133.9h2.2v2.2h-2.2zM378.9 133.9h2.2v2.2h-2.2zM383.5 133.9h2.2v2.2h-2.2zM396.8 133.9h2.2v2.2h-2.2zM416.6 133.9h2.2v2.2h-2.2zM439.9 133.9h2.2v2.2h-2.2zM463.2 133.9h2.2v2.2h-2.2zM483.0 133.9h2.2v2.2h-2.2zM496.3 133.9h2.2v2.2h-2.2zM439.9 138.9h2.2v2.2h-2.2zM439.9 196.9h2.2v2.2h-2.2zM449.7 199.9h2.2v2.2h-2.2zM449.0 199.9h2.2v2.2h-2.2zM446.8 199.9h2.2v2.2h-2.2zM443.7 199.9h2.2v2.2h-2.2zM439.9 199.9h2.2v2.2h-2.2zM436.1 199.9h2.2v2.2h-2.2zM433.0 199.9h2.2v2.2h-2.2zM430.8 199.9h2.2v2.2h-2.2zM430.1 199.9h2.2v2.2h-2.2zM430.8 199.9h2.2v2.2h-2.2zM433.0 199.9h2.2v2.2h-2.2zM436.1 199.9h2.2v2.2h-2.2zM439.9 199.9h2.2v2.2h-2.2zM443.7 199.9h2.2v2.2h-2.2zM446.8 199.9h2.2v2.2h-2.2zM449.0 199.9h2.2v2.2h-2.2zM446.7 228.4h2.2v2.2h-2.2zM446.2 228.4h2.2v2.2h-2.2zM444.7 228.4h2.2v2.2h-2.2zM442.5 228.4h2.2v2.2h-2.2zM439.9 228.4h2.2v2.2h-2.2zM437.3 228.4h2.2v2.2h-2.2zM435.1 228.4h2.2v2.2h-2.2zM433.6 228.4h2.2v2.2h-2.2zM433.1 228.4h2.2v2.2h-2.2zM433.6 228.4h2.2v2.2h-2.2zM435.1 228.4h2.2v2.2h-2.2zM437.3 228.4h2.2v2.2h-2.2zM439.9 228.4h2.2v2.2h-2.2zM442.5 228.4h2.2v2.2h-2.2zM444.7 228.4h2.2v2.2h-2.2zM446.2 228.4h2.2v2.2h-2.2zM446.3 252.9h2.2v2.2h-2.2zM445.8 252.9h2.2v2.2h-2.2zM444.4 252.9h2.2v2.2h-2.2zM442.3 252.9h2.2v2.2h-2.2zM439.9 252.9h2.2v2.2h-2.2zM437.5 252.9h2.2v2.2h-2.2zM435.4 252.9h2.2v2.2h-2.2zM434.0 252.9h2.2v2.2h-2.2zM433.5 252.9h2.2v2.2h-2.2zM434.0 252.9h2.2v2.2h-2.2zM435.4 252.9h2.2v2.2h-2.2zM437.5 252.9h2.2v2.2h-2.2zM439.9 252.9h2.2v2.2h-2.2zM442.3 252.9h2.2v2.2h-2.2zM444.4 252.9h2.2v2.2h-2.2zM445.8 252.9h2.2v2.2h-2.2zM446.3 278.4h2.2v2.2h-2.2zM445.8 278.4h2.2v2.2h-2.2zM444.4 278.4h2.2v2.2h-2.2zM442.3 278.4h2.2v2.2h-2.2zM439.9 278.4h2.2v2.2h-2.2zM437.5 278.4h2.2v2.2h-2.2zM435.4 278.4h2.2v2.2h-2.2zM434.0 278.4h2.2v2.2h-2.2zM433.5 278.4h2.2v2.2h-2.2zM434.0 278.4h2.2v2.2h-2.2zM435.4 278.4h2.2v2.2h-2.2zM437.5 278.4h2.2v2.2h-2.2zM439.9 278.4h2.2v2.2h-2.2zM442.3 278.4h2.2v2.2h-2.2zM444.4 278.4h2.2v2.2h-2.2zM445.8 278.4h2.2v2.2h-2.2zM446.9 302.9h2.2v2.2h-2.2zM446.4 302.9h2.2v2.2h-2.2zM444.8 302.9h2.2v2.2h-2.2zM442.6 302.9h2.2v2.2h-2.2zM439.9 302.9h2.2v2.2h-2.2zM437.2 302.9h2.2v2.2h-2.2zM435.0 302.9h2.2v2.2h-2.2zM433.4 302.9h2.2v2.2h-2.2zM432.9 302.9h2.2v2.2h-2.2zM433.4 302.9h2.2v2.2h-2.2zM435.0 302.9h2.2v2.2h-2.2zM437.2 302.9h2.2v2.2h-2.2zM439.9 302.9h2.2v2.2h-2.2zM442.6 302.9h2.2v2.2h-2.2zM444.8 302.9h2.2v2.2h-2.2zM446.4 302.9h2.2v2.2h-2.2zM449.9 331.4h2.2v2.2h-2.2zM449.1 331.4h2.2v2.2h-2.2zM447.0 331.4h2.2v2.2h-2.2zM443.7 331.4h2.2v2.2h-2.2zM439.9 331.4h2.2v2.2h-2.2zM436.1 331.4h2.2v2.2h-2.2zM432.8 331.4h2.2v2.2h-2.2zM430.7 331.4h2.2v2.2h-2.2zM429.9 331.4h2.2v2.2h-2.2zM430.7 331.4h2.2v2.2h-2.2zM432.8 331.4h2.2v2.2h-2.2zM436.1 331.4h2.2v2.2h-2.2zM439.9 331.4h2.2v2.2h-2.2zM443.7 331.4h2.2v2.2h-2.2zM447.0 331.4h2.2v2.2h-2.2zM449.1 331.4h2.2v2.2h-2.2zM465.9 333.7h2.2v2.2h-2.2zM463.9 333.7h2.2v2.2h-2.2zM458.3 333.7h2.2v2.2h-2.2zM449.8 333.7h2.2v2.2h-2.2zM439.9 333.7h2.2v2.2h-2.2zM430.0 333.7h2.2v2.2h-2.2zM421.5 333.7h2.2v2.2h-2.2zM415.9 333.7h2.2v2.2h-2.2zM413.9 333.7h2.2v2.2h-2.2zM415.9 333.7h2.2v2.2h-2.2zM421.5 333.7h2.2v2.2h-2.2zM430.0 333.7h2.2v2.2h-2.2zM439.9 333.7h2.2v2.2h-2.2zM449.8 333.7h2.2v2.2h-2.2zM458.3 333.7h2.2v2.2h-2.2zM463.9 333.7h2.2v2.2h-2.2zM482.9 337.9h2.2v2.2h-2.2zM479.6 337.9h2.2v2.2h-2.2zM470.3 337.9h2.2v2.2h-2.2zM456.4 337.9h2.2v2.2h-2.2zM439.9 337.9h2.2v2.2h-2.2zM423.4 337.9h2.2v2.2h-2.2zM409.5 337.9h2.2v2.2h-2.2zM400.2 337.9h2.2v2.2h-2.2zM396.9 337.9h2.2v2.2h-2.2zM400.2 337.9h2.2v2.2h-2.2zM409.5 337.9h2.2v2.2h-2.2zM423.4 337.9h2.2v2.2h-2.2zM439.9 337.9h2.2v2.2h-2.2zM456.4 337.9h2.2v2.2h-2.2zM470.3 337.9h2.2v2.2h-2.2zM479.6 337.9h2.2v2.2h-2.2zM491.9 340.7h2.2v2.2h-2.2zM487.9 340.7h2.2v2.2h-2.2zM476.7 340.7h2.2v2.2h-2.2zM459.8 340.7h2.2v2.2h-2.2zM439.9 340.7h2.2v2.2h-2.2zM420.0 340.7h2.2v2.2h-2.2zM403.1 340.7h2.2v2.2h-2.2zM391.9 340.7h2.2v2.2h-2.2zM387.9 340.7h2.2v2.2h-2.2zM391.9 340.7h2.2v2.2h-2.2zM403.1 340.7h2.2v2.2h-2.2zM420.0 340.7h2.2v2.2h-2.2zM439.9 340.7h2.2v2.2h-2.2zM459.8 340.7h2.2v2.2h-2.2zM476.7 340.7h2.2v2.2h-2.2zM487.9 340.7h2.2v2.2h-2.2zM351.4 17.4h2.2v2.2h-2.2zM351.4 17.4h2.2v2.2h-2.2zM351.4 17.4h2.2v2.2h-2.2zM351.4 17.4h2.2v2.2h-2.2zM351.4 17.4h2.2v2.2h-2.2zM351.4 17.4h2.2v2.2h-2.2zM351.4 17.4h2.2v2.2h-2.2zM351.4 17.4h2.2v2.2h-2.2zM351.4 17.4h2.2v2.2h-2.2zM351.4 17.4h2.2v2.2h-2.2zM351.4 17.4h2.2v2.2h-2.2zM351.4 17.4h2.2v2.2h-2.2zM359.4 18.4h2.2v2.2h-2.2zM358.3 18.4h2.2v2.2h-2.2zM355.4 18.4h2.2v2.2h-2.2zM351.4 18.4h2.2v2.2h-2.2zM347.4 18.4h2.2v2.2h-2.2zM344.5 18.4h2.2v2.2h-2.2zM343.4 18.4h2.2v2.2h-2.2zM344.5 18.4h2.2v2.2h-2.2zM347.4 18.4h2.2v2.2h-2.2zM351.4 18.4h2.2v2.2h-2.2zM355.4 18.4h2.2v2.2h-2.2zM358.3 18.4h2.2v2.2h-2.2zM365.4 23.4h2.2v2.2h-2.2zM363.5 23.4h2.2v2.2h-2.2zM358.4 23.4h2.2v2.2h-2.2zM351.4 23.4h2.2v2.2h-2.2zM344.4 23.4h2.2v2.2h-2.2zM339.3 23.4h2.2v2.2h-2.2zM337.4 23.4h2.2v2.2h-2.2zM339.3 23.4h2.2v2.2h-2.2zM344.4 23.4h2.2v2.2h-2.2zM351.4 23.4h2.2v2.2h-2.2zM358.4 23.4h2.2v2.2h-2.2zM363.5 23.4h2.2v2.2h-2.2zM367.4 35.9h2.2v2.2h-2.2zM365.3 35.9h2.2v2.2h-2.2zM359.4 35.9h2.2v2.2h-2.2zM351.4 35.9h2.2v2.2h-2.2zM343.4 35.9h2.2v2.2h-2.2zM337.5 35.9h2.2v2.2h-2.2zM335.4 35.9h2.2v2.2h-2.2zM337.5 35.9h2.2v2.2h-2.2zM343.4 35.9h2.2v2.2h-2.2zM351.4 35.9h2.2v2.2h-2.2zM359.4 35.9h2.2v2.2h-2.2zM365.3 35.9h2.2v2.2h-2.2zM365.4 47.4h2.2v2.2h-2.2zM363.5 47.4h2.2v2.2h-2.2zM358.4 47.4h2.2v2.2h-2.2zM351.4 47.4h2.2v2.2h-2.2zM344.4 47.4h2.2v2.2h-2.2zM339.3 47.4h2.2v2.2h-2.2zM337.4 47.4h2.2v2.2h-2.2zM339.3 47.4h2.2v2.2h-2.2zM344.4 47.4h2.2v2.2h-2.2zM351.4 47.4h2.2v2.2h-2.2zM358.4 47.4h2.2v2.2h-2.2zM363.5 47.4h2.2v2.2h-2.2zM359.4 52.9h2.2v2.2h-2.2zM358.3 52.9h2.2v2.2h-2.2zM355.4 52.9h2.2v2.2h-2.2zM351.4 52.9h2.2v2.2h-2.2zM347.4 52.9h2.2v2.2h-2.2zM344.5 52.9h2.2v2.2h-2.2zM343.4 52.9h2.2v2.2h-2.2zM344.5 52.9h2.2v2.2h-2.2zM347.4 52.9h2.2v2.2h-2.2zM351.4 52.9h2.2v2.2h-2.2zM355.4 52.9h2.2v2.2h-2.2zM358.3 52.9h2.2v2.2h-2.2zM351.4 54.9h2.2v2.2h-2.2zM351.4 54.9h2.2v2.2h-2.2zM351.4 54.9h2.2v2.2h-2.2zM351.4 54.9h2.2v2.2h-2.2zM351.4 54.9h2.2v2.2h-2.2zM351.4 54.9h2.2v2.2h-2.2zM351.4 54.9h2.2v2.2h-2.2zM351.4 54.9h2.2v2.2h-2.2zM351.4 54.9h2.2v2.2h-2.2zM351.4 54.9h2.2v2.2h-2.2zM351.4 54.9h2.2v2.2h-2.2zM351.4 54.9h2.2v2.2h-2.2zM567.9 26.4h2.2v2.2h-2.2zM567.9 138.9h2.2v2.2h-2.2z" fill="#fff"/><rect x="430.2" y="199.7" width="21.6" height="2.6" fill="#fff" fill-opacity="0.92"/><rect x="433.2" y="228.2" width="15.6" height="2.6" fill="#fff" fill-opacity="0.92"/><rect x="433.6" y="252.7" width="14.8" height="2.6" fill="#fff" fill-opacity="0.92"/><rect x="433.6" y="278.2" width="14.8" height="2.6" fill="#fff" fill-opacity="0.92"/><rect x="433.0" y="302.7" width="16.0" height="2.6" fill="#fff" fill-opacity="0.92"/><rect x="430.5" y="332.0" width="21.0" height="2.2" fill="#fff" fill-opacity="0.92"/>
</g>
<g clip-path="url(#cbl)">
<path d="M147 490.5H251" stroke="#d8d850" stroke-width="1.3"/><path d="M52.3 585V655" stroke="#c850c8" stroke-width="1.6"/>
<path d="M52.3 389V396" stroke="#333" stroke-width="1.2"/><path d="M52.3 396V480" stroke="#e8e8e8" stroke-width="1.6" stroke-opacity="0.8"/>
<path d="M147.3 490.5L140.1 454.1M140.1 454.1L119.5 423.3M119.5 423.3L88.7 402.7M88.7 402.7L52.3 395.5M52.3 395.5L15.9 402.7M15.9 402.7L-14.9 423.3M-14.9 423.3L-35.5 454.1M-35.5 454.1L-42.7 490.5M-42.7 490.5L-35.5 526.9M-35.5 526.9L-14.9 557.7M-14.9 557.7L15.9 578.3M15.9 578.3L52.3 585.5M52.3 585.5L88.7 578.3M88.7 578.3L119.5 557.7M119.5 557.7L140.1 526.9M140.1 526.9L147.3 490.5M136.6 490.5L130.2 458.2M130.2 458.2L111.9 430.9M111.9 430.9L84.6 412.6M84.6 412.6L52.3 406.2M52.3 406.2L20.0 412.6M20.0 412.6L-7.3 430.9M-7.3 430.9L-25.6 458.2M-25.6 458.2L-32.0 490.5M-32.0 490.5L-25.6 522.8M-25.6 522.8L-7.3 550.1M-7.3 550.1L20.0 568.4M20.0 568.4L52.3 574.8M52.3 574.8L84.6 568.4M84.6 568.4L111.9 550.1M111.9 550.1L130.2 522.8M130.2 522.8L136.6 490.5M124.7 490.5L119.2 462.8M119.2 462.8L103.5 439.3M103.5 439.3L80.0 423.6M80.0 423.6L52.3 418.1M52.3 418.1L24.6 423.6M24.6 423.6L1.1 439.3M1.1 439.3L-14.6 462.8M-14.6 462.8L-20.1 490.5M-20.1 490.5L-14.6 518.2M-14.6 518.2L1.1 541.7M1.1 541.7L24.6 557.4M24.6 557.4L52.3 562.9M52.3 562.9L80.0 557.4M80.0 557.4L103.5 541.7M103.5 541.7L119.2 518.2M119.2 518.2L124.7 490.5M110.1 490.5L105.7 468.4M105.7 468.4L93.2 449.6M93.2 449.6L74.4 437.1M74.4 437.1L52.3 432.7M52.3 432.7L30.2 437.1M30.2 437.1L11.4 449.6M11.4 449.6L-1.1 468.4M-1.1 468.4L-5.5 490.5M-5.5 490.5L-1.1 512.6M-1.1 512.6L11.4 531.4M11.4 531.4L30.2 543.9M30.2 543.9L52.3 548.3M52.3 548.3L74.4 543.9M74.4 543.9L93.2 531.4M93.2 531.4L105.7 512.6M105.7 512.6L110.1 490.5M88.8 490.5L86.0 476.5M86.0 476.5L78.1 464.7M78.1 464.7L66.3 456.8M66.3 456.8L52.3 454.0M52.3 454.0L38.3 456.8M38.3 456.8L26.5 464.7M26.5 464.7L18.6 476.5M18.6 476.5L15.8 490.5M15.8 490.5L18.6 504.5M18.6 504.5L26.5 516.3M26.5 516.3L38.3 524.2M38.3 524.2L52.3 527.0M52.3 527.0L66.3 524.2M66.3 524.2L78.1 516.3M78.1 516.3L86.0 504.5M86.0 504.5L88.8 490.5M65.3 490.5L64.3 485.5M64.3 485.5L61.5 481.3M61.5 481.3L57.3 478.5M57.3 478.5L52.3 477.5M52.3 477.5L47.3 478.5M47.3 478.5L43.1 481.3M43.1 481.3L40.3 485.5M40.3 485.5L39.3 490.5M39.3 490.5L40.3 495.5M40.3 495.5L43.1 499.7M43.1 499.7L47.3 502.5M47.3 502.5L52.3 503.5M52.3 503.5L57.3 502.5M57.3 502.5L61.5 499.7M61.5 499.7L64.3 495.5M64.3 495.5L65.3 490.5M61.8 490.5L61.1 486.9M61.1 486.9L59.0 483.8M59.0 483.8L55.9 481.7M55.9 481.7L52.3 481.0M52.3 481.0L48.7 481.7M48.7 481.7L45.6 483.8M45.6 483.8L43.5 486.9M43.5 486.9L42.8 490.5M42.8 490.5L43.5 494.1M43.5 494.1L45.6 497.2M45.6 497.2L48.7 499.3M48.7 499.3L52.3 500.0M52.3 500.0L55.9 499.3M55.9 499.3L59.0 497.2M59.0 497.2L61.1 494.1M61.1 494.1L61.8 490.5M58.8 490.5L58.3 488.0M58.3 488.0L56.9 485.9M56.9 485.9L54.8 484.5M54.8 484.5L52.3 484.0M52.3 484.0L49.8 484.5M49.8 484.5L47.7 485.9M47.7 485.9L46.3 488.0M46.3 488.0L45.8 490.5M45.8 490.5L46.3 493.0M46.3 493.0L47.7 495.1M47.7 495.1L49.8 496.5M49.8 496.5L52.3 497.0M52.3 497.0L54.8 496.5M54.8 496.5L56.9 495.1M56.9 495.1L58.3 493.0M58.3 493.0L58.8 490.5M147.3 490.5L136.6 490.5M140.1 454.1L130.2 458.2M119.5 423.3L111.9 430.9M88.7 402.7L84.6 412.6M52.3 395.5L52.3 406.2M15.9 402.7L20.0 412.6M-14.9 423.3L-7.3 430.9M-35.5 454.1L-25.6 458.2M-42.7 490.5L-32.0 490.5M-35.5 526.9L-25.6 522.8M-14.9 557.7L-7.3 550.1M15.9 578.3L20.0 568.4M52.3 585.5L52.3 574.8M88.7 578.3L84.6 568.4M119.5 557.7L111.9 550.1M140.1 526.9L130.2 522.8M136.6 490.5L124.7 490.5M130.2 458.2L119.2 462.8M111.9 430.9L103.5 439.3M84.6 412.6L80.0 423.6M52.3 406.2L52.3 418.1M20.0 412.6L24.6 423.6M-7.3 430.9L1.1 439.3M-25.6 458.2L-14.6 462.8M-32.0 490.5L-20.1 490.5M-25.6 522.8L-14.6 518.2M-7.3 550.1L1.1 541.7M20.0 568.4L24.6 557.4M52.3 574.8L52.3 562.9M84.6 568.4L80.0 557.4M111.9 550.1L103.5 541.7M130.2 522.8L119.2 518.2M124.7 490.5L110.1 490.5M124.7 490.5L105.7 468.4M119.2 462.8L105.7 468.4M119.2 462.8L93.2 449.6M103.5 439.3L93.2 449.6M103.5 439.3L74.4 437.1M80.0 423.6L74.4 437.1M80.0 423.6L52.3 432.7M52.3 418.1L52.3 432.7M52.3 418.1L30.2 437.1M24.6 423.6L30.2 437.1M24.6 423.6L11.4 449.6M1.1 439.3L11.4 449.6M1.1 439.3L-1.1 468.4M-14.6 462.8L-1.1 468.4M-14.6 462.8L-5.5 490.5M-20.1 490.5L-5.5 490.5M-20.1 490.5L-1.1 512.6M-14.6 518.2L-1.1 512.6M-14.6 518.2L11.4 531.4M1.1 541.7L11.4 531.4M1.1 541.7L30.2 543.9M24.6 557.4L30.2 543.9M24.6 557.4L52.3 548.3M52.3 562.9L52.3 548.3M52.3 562.9L74.4 543.9M80.0 557.4L74.4 543.9M80.0 557.4L93.2 531.4M103.5 541.7L93.2 531.4M103.5 541.7L105.7 512.6M119.2 518.2L105.7 512.6M119.2 518.2L110.1 490.5M110.1 490.5L88.8 490.5M110.1 490.5L86.0 476.5M105.7 468.4L86.0 476.5M105.7 468.4L78.1 464.7M93.2 449.6L78.1 464.7M93.2 449.6L66.3 456.8M74.4 437.1L66.3 456.8M74.4 437.1L52.3 454.0M52.3 432.7L52.3 454.0M52.3 432.7L38.3 456.8M30.2 437.1L38.3 456.8M30.2 437.1L26.5 464.7M11.4 449.6L26.5 464.7M11.4 449.6L18.6 476.5M-1.1 468.4L18.6 476.5M-1.1 468.4L15.8 490.5M-5.5 490.5L15.8 490.5M-5.5 490.5L18.6 504.5M-1.1 512.6L18.6 504.5M-1.1 512.6L26.5 516.3M11.4 531.4L26.5 516.3M11.4 531.4L38.3 524.2M30.2 543.9L38.3 524.2M30.2 543.9L52.3 527.0M52.3 548.3L52.3 527.0M52.3 548.3L66.3 524.2M74.4 543.9L66.3 524.2M74.4 543.9L78.1 516.3M93.2 531.4L78.1 516.3M93.2 531.4L86.0 504.5M105.7 512.6L86.0 504.5M105.7 512.6L88.8 490.5M88.8 490.5L65.3 490.5M88.8 490.5L64.3 485.5M86.0 476.5L64.3 485.5M86.0 476.5L61.5 481.3M78.1 464.7L61.5 481.3M78.1 464.7L57.3 478.5M66.3 456.8L57.3 478.5M66.3 456.8L52.3 477.5M52.3 454.0L52.3 477.5M52.3 454.0L47.3 478.5M38.3 456.8L47.3 478.5M38.3 456.8L43.1 481.3M26.5 464.7L43.1 481.3M26.5 464.7L40.3 485.5M18.6 476.5L40.3 485.5M18.6 476.5L39.3 490.5M15.8 490.5L39.3 490.5M15.8 490.5L40.3 495.5M18.6 504.5L40.3 495.5M18.6 504.5L43.1 499.7M26.5 516.3L43.1 499.7M26.5 516.3L47.3 502.5M38.3 524.2L47.3 502.5M38.3 524.2L52.3 503.5M52.3 527.0L52.3 503.5M52.3 527.0L57.3 502.5M66.3 524.2L57.3 502.5M66.3 524.2L61.5 499.7M78.1 516.3L61.5 499.7M78.1 516.3L64.3 495.5M86.0 504.5L64.3 495.5M86.0 504.5L65.3 490.5M65.3 490.5L61.8 490.5M64.3 485.5L61.1 486.9M61.5 481.3L59.0 483.8M57.3 478.5L55.9 481.7M52.3 477.5L52.3 481.0M47.3 478.5L48.7 481.7M43.1 481.3L45.6 483.8M40.3 485.5L43.5 486.9M39.3 490.5L42.8 490.5M40.3 495.5L43.5 494.1M43.1 499.7L45.6 497.2M47.3 502.5L48.7 499.3M52.3 503.5L52.3 500.0M57.3 502.5L55.9 499.3M61.5 499.7L59.0 497.2M64.3 495.5L61.1 494.1M61.8 490.5L58.8 490.5M61.1 486.9L58.3 488.0M59.0 483.8L56.9 485.9M55.9 481.7L54.8 484.5M52.3 481.0L52.3 484.0M48.7 481.7L49.8 484.5M45.6 483.8L47.7 485.9M43.5 486.9L46.3 488.0M42.8 490.5L45.8 490.5M43.5 494.1L46.3 493.0M45.6 497.2L47.7 495.1M48.7 499.3L49.8 496.5M52.3 500.0L52.3 497.0M55.9 499.3L54.8 496.5M59.0 497.2L56.9 495.1M61.1 494.1L58.3 493.0M58.8 490.5L52.3 490.5M147.3 490.5L52.3 490.5M58.3 488.0L52.3 490.5M140.1 454.1L52.3 490.5M56.9 485.9L52.3 490.5M119.5 423.3L52.3 490.5M54.8 484.5L52.3 490.5M88.7 402.7L52.3 490.5M52.3 484.0L52.3 490.5M52.3 395.5L52.3 490.5M49.8 484.5L52.3 490.5M15.9 402.7L52.3 490.5M47.7 485.9L52.3 490.5M-14.9 423.3L52.3 490.5M46.3 488.0L52.3 490.5M-35.5 454.1L52.3 490.5M45.8 490.5L52.3 490.5M-42.7 490.5L52.3 490.5M46.3 493.0L52.3 490.5M-35.5 526.9L52.3 490.5M47.7 495.1L52.3 490.5M-14.9 557.7L52.3 490.5M49.8 496.5L52.3 490.5M15.9 578.3L52.3 490.5M52.3 497.0L52.3 490.5M52.3 585.5L52.3 490.5M54.8 496.5L52.3 490.5M88.7 578.3L52.3 490.5M56.9 495.1L52.3 490.5M119.5 557.7L52.3 490.5M58.3 493.0L52.3 490.5M140.1 526.9L52.3 490.5M73.7 367.8L70.8 357.1M70.8 357.1L63.0 349.2M63.0 349.2L52.2 346.3M52.2 346.3L41.5 349.2M41.5 349.2L33.6 357.1M33.6 357.1L30.7 367.8M30.7 367.8L33.6 378.6M33.6 378.6L41.4 386.4M41.4 386.4L52.2 389.3M52.2 389.3L63.0 386.4M63.0 386.4L70.8 378.6M70.8 378.6L73.7 367.8M69.7 367.8L67.4 359.1M67.4 359.1L61.0 352.6M61.0 352.6L52.2 350.3M52.2 350.3L43.5 352.6M43.5 352.6L37.0 359.1M37.0 359.1L34.7 367.8M34.7 367.8L37.0 376.6M37.0 376.6L43.4 383.0M43.4 383.0L52.2 385.3M52.2 385.3L61.0 383.0M61.0 383.0L67.4 376.6M67.4 376.6L69.7 367.8M63.0 367.8L61.6 362.4M61.6 362.4L57.6 358.4M57.6 358.4L52.2 357.0M52.2 357.0L46.8 358.4M46.8 358.4L42.8 362.4M42.8 362.4L41.4 367.8M41.4 367.8L42.8 373.2M42.8 373.2L46.8 377.2M46.8 377.2L52.2 378.6M52.2 378.6L57.6 377.2M57.6 377.2L61.6 373.2M61.6 373.2L63.0 367.8M73.7 367.8L69.7 367.8M73.7 367.8L67.4 359.1M70.8 357.1L67.4 359.1M70.8 357.1L61.0 352.6M63.0 349.2L61.0 352.6M63.0 349.2L52.2 350.3M52.2 346.3L52.2 350.3M52.2 346.3L43.5 352.6M41.5 349.2L43.5 352.6M41.5 349.2L37.0 359.1M33.6 357.1L37.0 359.1M33.6 357.1L34.7 367.8M30.7 367.8L34.7 367.8M30.7 367.8L37.0 376.6M33.6 378.6L37.0 376.6M33.6 378.6L43.4 383.0M41.4 386.4L43.4 383.0M41.4 386.4L52.2 385.3M52.2 389.3L52.2 385.3M52.2 389.3L61.0 383.0M63.0 386.4L61.0 383.0M63.0 386.4L67.4 376.6M70.8 378.6L67.4 376.6M70.8 378.6L69.7 367.8M69.7 367.8L63.0 367.8M69.7 367.8L61.6 362.4M67.4 359.1L61.6 362.4M67.4 359.1L57.6 358.4M61.0 352.6L57.6 358.4M61.0 352.6L52.2 357.0M52.2 350.3L52.2 357.0M52.2 350.3L46.8 358.4M43.5 352.6L46.8 358.4M43.5 352.6L42.8 362.4M37.0 359.1L42.8 362.4M37.0 359.1L41.4 367.8M34.7 367.8L41.4 367.8M34.7 367.8L42.8 373.2M37.0 376.6L42.8 373.2M37.0 376.6L46.8 377.2M43.4 383.0L46.8 377.2M43.4 383.0L52.2 378.6M52.2 385.3L52.2 378.6M52.2 385.3L57.6 377.2M61.0 383.0L57.6 377.2M61.0 383.0L61.6 373.2M67.4 376.6L61.6 373.2M67.4 376.6L63.0 367.8M63.0 367.8L52.2 367.8M61.6 362.4L52.2 367.8M57.6 358.4L52.2 367.8M52.2 357.0L52.2 367.8M46.8 358.4L52.2 367.8M42.8 362.4L52.2 367.8M41.4 367.8L52.2 367.8M42.8 373.2L52.2 367.8M46.8 377.2L52.2 367.8M52.2 378.6L52.2 367.8M57.6 377.2L52.2 367.8M61.6 373.2L52.2 367.8" stroke="#e4e4e4" stroke-opacity="0.70" stroke-width="0.75" fill="none"/><path d="M146.2 489.4h2.2v2.2h-2.2zM139.0 453.0h2.2v2.2h-2.2zM118.4 422.2h2.2v2.2h-2.2zM87.6 401.6h2.2v2.2h-2.2zM51.2 394.4h2.2v2.2h-2.2zM14.8 401.6h2.2v2.2h-2.2zM-16.0 422.2h2.2v2.2h-2.2zM-36.6 453.0h2.2v2.2h-2.2zM-43.8 489.4h2.2v2.2h-2.2zM-36.6 525.8h2.2v2.2h-2.2zM-16.0 556.6h2.2v2.2h-2.2zM14.8 577.2h2.2v2.2h-2.2zM51.2 584.4h2.2v2.2h-2.2zM87.6 577.2h2.2v2.2h-2.2zM118.4 556.6h2.2v2.2h-2.2zM139.0 525.8h2.2v2.2h-2.2zM135.5 489.4h2.2v2.2h-2.2zM129.1 457.1h2.2v2.2h-2.2zM110.8 429.8h2.2v2.2h-2.2zM83.5 411.5h2.2v2.2h-2.2zM51.2 405.1h2.2v2.2h-2.2zM18.9 411.5h2.2v2.2h-2.2zM-8.4 429.8h2.2v2.2h-2.2zM-26.7 457.1h2.2v2.2h-2.2zM-33.1 489.4h2.2v2.2h-2.2zM-26.7 521.7h2.2v2.2h-2.2zM-8.4 549.0h2.2v2.2h-2.2zM18.9 567.3h2.2v2.2h-2.2zM51.2 573.7h2.2v2.2h-2.2zM83.5 567.3h2.2v2.2h-2.2zM110.8 549.0h2.2v2.2h-2.2zM129.1 521.7h2.2v2.2h-2.2zM123.6 489.4h2.2v2.2h-2.2zM118.1 461.7h2.2v2.2h-2.2zM102.4 438.2h2.2v2.2h-2.2zM78.9 422.5h2.2v2.2h-2.2zM51.2 417.0h2.2v2.2h-2.2zM23.5 422.5h2.2v2.2h-2.2zM0.0 438.2h2.2v2.2h-2.2zM-15.7 461.7h2.2v2.2h-2.2zM-21.2 489.4h2.2v2.2h-2.2zM-15.7 517.1h2.2v2.2h-2.2zM0.0 540.6h2.2v2.2h-2.2zM23.5 556.3h2.2v2.2h-2.2zM51.2 561.8h2.2v2.2h-2.2zM78.9 556.3h2.2v2.2h-2.2zM102.4 540.6h2.2v2.2h-2.2zM118.1 517.1h2.2v2.2h-2.2zM109.0 489.4h2.2v2.2h-2.2zM104.6 467.3h2.2v2.2h-2.2zM92.1 448.5h2.2v2.2h-2.2zM73.3 436.0h2.2v2.2h-2.2zM51.2 431.6h2.2v2.2h-2.2zM29.1 436.0h2.2v2.2h-2.2zM10.3 448.5h2.2v2.2h-2.2zM-2.2 467.3h2.2v2.2h-2.2zM-6.6 489.4h2.2v2.2h-2.2zM-2.2 511.5h2.2v2.2h-2.2zM10.3 530.3h2.2v2.2h-2.2zM29.1 542.8h2.2v2.2h-2.2zM51.2 547.2h2.2v2.2h-2.2zM73.3 542.8h2.2v2.2h-2.2zM92.1 530.3h2.2v2.2h-2.2zM104.6 511.5h2.2v2.2h-2.2zM87.7 489.4h2.2v2.2h-2.2zM84.9 475.4h2.2v2.2h-2.2zM77.0 463.6h2.2v2.2h-2.2zM65.2 455.7h2.2v2.2h-2.2zM51.2 452.9h2.2v2.2h-2.2zM37.2 455.7h2.2v2.2h-2.2zM25.4 463.6h2.2v2.2h-2.2zM17.5 475.4h2.2v2.2h-2.2zM14.7 489.4h2.2v2.2h-2.2zM17.5 503.4h2.2v2.2h-2.2zM25.4 515.2h2.2v2.2h-2.2zM37.2 523.1h2.2v2.2h-2.2zM51.2 525.9h2.2v2.2h-2.2zM65.2 523.1h2.2v2.2h-2.2zM77.0 515.2h2.2v2.2h-2.2zM84.9 503.4h2.2v2.2h-2.2zM64.2 489.4h2.2v2.2h-2.2zM63.2 484.4h2.2v2.2h-2.2zM60.4 480.2h2.2v2.2h-2.2zM56.2 477.4h2.2v2.2h-2.2zM51.2 476.4h2.2v2.2h-2.2zM46.2 477.4h2.2v2.2h-2.2zM42.0 480.2h2.2v2.2h-2.2zM39.2 484.4h2.2v2.2h-2.2zM38.2 489.4h2.2v2.2h-2.2zM39.2 494.4h2.2v2.2h-2.2zM42.0 498.6h2.2v2.2h-2.2zM46.2 501.4h2.2v2.2h-2.2zM51.2 502.4h2.2v2.2h-2.2zM56.2 501.4h2.2v2.2h-2.2zM60.4 498.6h2.2v2.2h-2.2zM63.2 494.4h2.2v2.2h-2.2zM60.7 489.4h2.2v2.2h-2.2zM60.0 485.8h2.2v2.2h-2.2zM57.9 482.7h2.2v2.2h-2.2zM54.8 480.6h2.2v2.2h-2.2zM51.2 479.9h2.2v2.2h-2.2zM47.6 480.6h2.2v2.2h-2.2zM44.5 482.7h2.2v2.2h-2.2zM42.4 485.8h2.2v2.2h-2.2zM41.7 489.4h2.2v2.2h-2.2zM42.4 493.0h2.2v2.2h-2.2zM44.5 496.1h2.2v2.2h-2.2zM47.6 498.2h2.2v2.2h-2.2zM51.2 498.9h2.2v2.2h-2.2zM54.8 498.2h2.2v2.2h-2.2zM57.9 496.1h2.2v2.2h-2.2zM60.0 493.0h2.2v2.2h-2.2zM57.7 489.4h2.2v2.2h-2.2zM57.2 486.9h2.2v2.2h-2.2zM55.8 484.8h2.2v2.2h-2.2zM53.7 483.4h2.2v2.2h-2.2zM51.2 482.9h2.2v2.2h-2.2zM48.7 483.4h2.2v2.2h-2.2zM46.6 484.8h2.2v2.2h-2.2zM45.2 486.9h2.2v2.2h-2.2zM44.7 489.4h2.2v2.2h-2.2zM45.2 491.9h2.2v2.2h-2.2zM46.6 494.0h2.2v2.2h-2.2zM48.7 495.4h2.2v2.2h-2.2zM51.2 495.9h2.2v2.2h-2.2zM53.7 495.4h2.2v2.2h-2.2zM55.8 494.0h2.2v2.2h-2.2zM57.2 491.9h2.2v2.2h-2.2zM72.6 366.7h2.2v2.2h-2.2zM69.7 355.9h2.2v2.2h-2.2zM61.9 348.1h2.2v2.2h-2.2zM51.1 345.2h2.2v2.2h-2.2zM40.4 348.1h2.2v2.2h-2.2zM32.5 355.9h2.2v2.2h-2.2zM29.6 366.7h2.2v2.2h-2.2zM32.5 377.4h2.2v2.2h-2.2zM40.3 385.3h2.2v2.2h-2.2zM51.1 388.2h2.2v2.2h-2.2zM61.9 385.3h2.2v2.2h-2.2zM69.7 377.4h2.2v2.2h-2.2zM68.6 366.7h2.2v2.2h-2.2zM66.3 357.9h2.2v2.2h-2.2zM59.9 351.5h2.2v2.2h-2.2zM51.1 349.2h2.2v2.2h-2.2zM42.4 351.5h2.2v2.2h-2.2zM35.9 357.9h2.2v2.2h-2.2zM33.6 366.7h2.2v2.2h-2.2zM35.9 375.4h2.2v2.2h-2.2zM42.3 381.9h2.2v2.2h-2.2zM51.1 384.2h2.2v2.2h-2.2zM59.9 381.9h2.2v2.2h-2.2zM66.3 375.4h2.2v2.2h-2.2zM61.9 366.7h2.2v2.2h-2.2zM60.5 361.3h2.2v2.2h-2.2zM56.5 357.3h2.2v2.2h-2.2zM51.1 355.9h2.2v2.2h-2.2zM45.7 357.3h2.2v2.2h-2.2zM41.7 361.3h2.2v2.2h-2.2zM40.3 366.7h2.2v2.2h-2.2zM41.7 372.1h2.2v2.2h-2.2zM45.7 376.1h2.2v2.2h-2.2zM51.1 377.5h2.2v2.2h-2.2zM56.5 376.1h2.2v2.2h-2.2zM60.5 372.1h2.2v2.2h-2.2zM51.1 366.7h2.2v2.2h-2.2z" fill="#fff"/>
</g>
<g clip-path="url(#cbr)">
<path d="M250.0 612.1L660.0 588.9M250.0 550.1L660.0 535.2M250.0 519.9L660.0 509.0M250.0 502.0L660.0 493.5M250.0 490.2L660.0 483.2M250.0 481.8L660.0 475.9M250.0 475.5L660.0 470.5M250.0 470.6L660.0 466.2M250.0 466.7L660.0 462.9M250.0 463.6L660.0 460.1M250.0 460.9L660.0 457.8M250.0 458.7L660.0 455.9M-19.8 460.5L-20.7 460.7M65.9 460.0L65.4 460.1M147.4 459.4L147.2 459.5M224.9 458.9L638.5 704.2M298.7 458.4L701.5 547.5M369.1 457.9L702.2 503.3M436.3 457.4L702.4 483.8M500.5 457.0L702.6 472.7M562.0 456.6L700.3 465.4M620.8 456.2L700.7 460.5M677.2 455.8L701.0 456.9M731.3 455.4L733.1 455.5M783.2 455.1L785.1 455.1M833.1 454.7L835.2 454.8M881.1 454.4L883.3 454.5M927.3 454.1L929.5 454.1M971.8 453.8L974.1 453.8" stroke="#84807e" stroke-width="1" stroke-opacity="0.62" fill="none"/>
<path d="M255 611.4L462 600" stroke="#8f50e0" stroke-width="1.6"/>
<path d="M462 599L556 655.5" stroke="#d8f070" stroke-width="1.2"/>
<path d="M463 346V470" stroke="#18d8e8" stroke-width="2"/>
<rect x="383.6" y="407.5" width="3.6" height="38" fill="#cc1226"/><rect x="383.6" y="407.5" width="1.2" height="38" fill="#8a1020"/><rect x="384.6" y="445" width="2.2" height="34" fill="#c01a30"/>
<ellipse cx="514" cy="414.4" rx="9" ry="12" fill="url(#ol)"/>
<ellipse cx="462.8" cy="599.3" rx="30.3" ry="6.3" fill="url(#base)"/>
<path d="M458 515 C459.5 535 460.5 545 460.3 560 C460 575 458.5 585 457 595 L469 595 C467.5 585 466 575 465.8 560 C465.6 545 467.5 535 469.5 515Z" fill="#ffff00"/>
<path d="M458 515 C459.5 535 460.5 545 460.3 560 C460 575 458.5 585 457 595 L459 595 C460 585 461.2 575 461.4 560 C461.6 545 460.5 535 459.5 515Z" fill="#b8b800"/>
<path d="M422.5 471L456.9 515.2L457.6 515.2L427.0 471Z" fill="#868600" stroke="#868600" stroke-width="0.4"/>
<path d="M427.0 471L457.6 515.2L458.5 515.2L433.8 471Z" fill="#acac00" stroke="#acac00" stroke-width="0.4"/>
<path d="M433.8 471L458.5 515.2L460.1 515.2L444.4 471Z" fill="#d0d000" stroke="#d0d000" stroke-width="0.4"/>
<path d="M444.4 471L460.1 515.2L464.2 515.2L472.5 471Z" fill="#fcfc00" stroke="#fcfc00" stroke-width="0.4"/>
<path d="M472.5 471L464.2 515.2L466.6 515.2L488.8 471Z" fill="#f0f000" stroke="#f0f000" stroke-width="0.4"/>
<path d="M488.8 471L466.6 515.2L467.9 515.2L498.0 471Z" fill="#dcdc00" stroke="#dcdc00" stroke-width="0.4"/>
<path d="M498.0 471L467.9 515.2L468.8 515.2L503.9 471Z" fill="#c2c200" stroke="#c2c200" stroke-width="0.4"/>
<path d="M422.6 471L456.9 515.2M503.9 471L468.8 515.2" stroke="#6e7400" stroke-width="0.9" stroke-opacity="0.8" fill="none"/>
<ellipse cx="463.8" cy="471.2" rx="40.4" ry="2.2" fill="#e6e630"/>
<ellipse cx="462.5" cy="470" rx="25" ry="1" fill="#d8e060"/>
<path d="M423.4 471.5 Q463.8 476.5 504.2 471.5 L503 473 Q463.8 478 424.6 473Z" fill="#f6f600"/>
</g>
</svg>
<div class="fps f7" style="left:287.1px;top:15.84px"><span class="a"><span class="b">7</span></span></div>
<div class="fps f15" style="left:274.2px;top:345.84px"><span class="a"><span class="b">15</span></span></div>
<div class="abs" style="left:655.6px;top:30px;width:145px;height:625px;border-top:1px solid #979fa2;border-left:1.4px solid #bcc0c2;box-sizing:border-box;background:#ece9d8"><div class="abs" style="left:0;top:0;width:1.2px;height:625px;background:#f8f8f2"></div></div>
<div class="tab" style="left:657.5px;width:28.5px"><span class="t">Model</span></div>
<div class="tab sel" style="left:687.0px;width:37.0px"><span class="t">Groups</span></div>
<div class="tab" style="left:724.0px;width:38.5px"><span class="t">Materials</span></div>
<div class="tab" style="left:763.0px;width:30.5px"><span class="t">Joints</span></div>
<div class="abs" style="left:659px;top:33px;width:140px;height:110px;box-sizing:border-box;border:1px solid #7f9db9;background:#fff">
<div class="li" style="top:1.0px;"><span class="tl">glass &lt;No Material&gt;</span></div>
<div class="li" style="top:10.7px;"><span class="tl">liquid &lt;No Material&gt;</span></div>
<div class="li" style="top:20.4px;"><span class="tl">olive &lt;No Material&gt;</span></div>
<div class="li" style="top:30.1px;background:#316ac5;color:#fff;"><span class="tl">stick &lt;No Material&gt;</span></div>
</div>
<div class="grp" style="left:660px;top:153px;width:136px;height:71px"></div>
<div class="lbl" style="left:664.5px;top:148px">Group</div>
<div class="btn" style="left:666.5px;top:163.5px;width:58.5px;"><span class="t">Select</span></div>
<div class="btn" style="left:730.0px;top:163.5px;width:58.5px;"><span class="t">Hide</span></div>
<div class="btn" style="left:666.5px;top:178.5px;width:58.5px;"><span class="t">Delete</span></div>
<div class="btn" style="left:730.0px;top:178.5px;width:58.5px;"><span class="t">Regroup</span></div>
<div class="btn" style="left:666.5px;top:193.5px;width:58.5px;"><span class="t">Rename</span></div>
<div class="abs" style="left:730px;top:193px;width:59px;height:12.5px;box-sizing:border-box;border:1px solid #7f9db9;background:#fff;font-size:8.8px;line-height:10px;padding-left:1.6px"><span class="tl">stick</span></div>
<div class="btn" style="left:666.5px;top:208.5px;width:58.5px;"><span class="t">Comment</span></div>
<div class="btn" style="left:730.0px;top:208.5px;width:25.5px;"><span class="t">Up</span></div>
<div class="btn" style="left:762.0px;top:208.5px;width:26.5px;"><span class="t">Down</span></div>
<div class="grp" style="left:660px;top:235px;width:137px;height:124px"></div>
<div class="lbl" style="left:664.5px;top:230px">Smoothing Groups</div>
<div class="btn" style="left:668.8px;top:245.6px;width:57.0px;background:linear-gradient(#dcdad0,#e8e6dc 60%,#f0eee6);border-color:#2a4a72;"><span class="t">Select</span></div>
<div class="btn" style="left:728.6px;top:245.6px;width:57.0px;box-shadow:inset 0 0 0 1px #98b8ea;"><span class="t">Assign</span></div>
<div class="nb" style="left:668.8px;top:260.6px">1</div>
<div class="nb" style="left:683.7px;top:260.6px">2</div>
<div class="nb" style="left:698.5px;top:260.6px">3</div>
<div class="nb" style="left:713.4px;top:260.6px">4</div>
<div class="nb" style="left:728.3px;top:260.6px">5</div>
<div class="nb" style="left:743.1px;top:260.6px">6</div>
<div class="nb" style="left:758.0px;top:260.6px">7</div>
<div class="nb" style="left:772.9px;top:260.6px">8</div>
<div class="nb" style="left:668.8px;top:275.8px">9</div>
<div class="nb" style="left:683.7px;top:275.8px">10</div>
<div class="nb" style="left:698.5px;top:275.8px">11</div>
<div class="nb" style="left:713.4px;top:275.8px">12</div>
<div class="nb" style="left:728.3px;top:275.8px">13</div>
<div class="nb" style="left:743.1px;top:275.8px">14</div>
<div class="nb" style="left:758.0px;top:275.8px">15</div>
<div class="nb" style="left:772.9px;top:275.8px">16</div>
<div class="nb" style="left:668.8px;top:291.0px">17</div>
<div class="nb" style="left:683.7px;top:291.0px">18</div>
<div class="nb" style="left:698.5px;top:291.0px">19</div>
<div class="nb" style="left:713.4px;top:291.0px">20</div>
<div class="nb" style="left:728.3px;top:291.0px">21</div>
<div class="nb" style="left:743.1px;top:291.0px">22</div>
<div class="nb" style="left:758.0px;top:291.0px">23</div>
<div class="nb" style="left:772.9px;top:291.0px">24</div>
<div class="nb" style="left:668.8px;top:306.2px">25</div>
<div class="nb" style="left:683.7px;top:306.2px">26</div>
<div class="nb" style="left:698.5px;top:306.2px">27</div>
<div class="nb" style="left:713.4px;top:306.2px">28</div>
<div class="nb" style="left:728.3px;top:306.2px">29</div>
<div class="nb" style="left:743.1px;top:306.2px">30</div>
<div class="nb" style="left:758.0px;top:306.2px">31</div>
<div class="nb" style="left:772.9px;top:306.2px">32</div>
<div class="btn" style="left:668.8px;top:323.6px;width:118.0px;"><span class="t">Clear All</span></div>
<div class="abs" style="left:668px;top:340px;width:9.5px;height:9.5px;box-sizing:border-box;border:1px solid #1c5180;background:linear-gradient(135deg,#dcdcd7,#fff)"><svg width="8" height="8" viewBox="0 0 8 8" style="left:0;top:0"><path d="M1.3 3.6L3 5.4L6.3 1.6" stroke="#21a121" stroke-width="1.6" fill="none"/></svg></div>
<div class="abs" style="left:680.5px;top:339.5px;font-size:8.8px;line-height:10px;white-space:nowrap"><span class="tl">Auto Smooth</span></div>
</body></html>
